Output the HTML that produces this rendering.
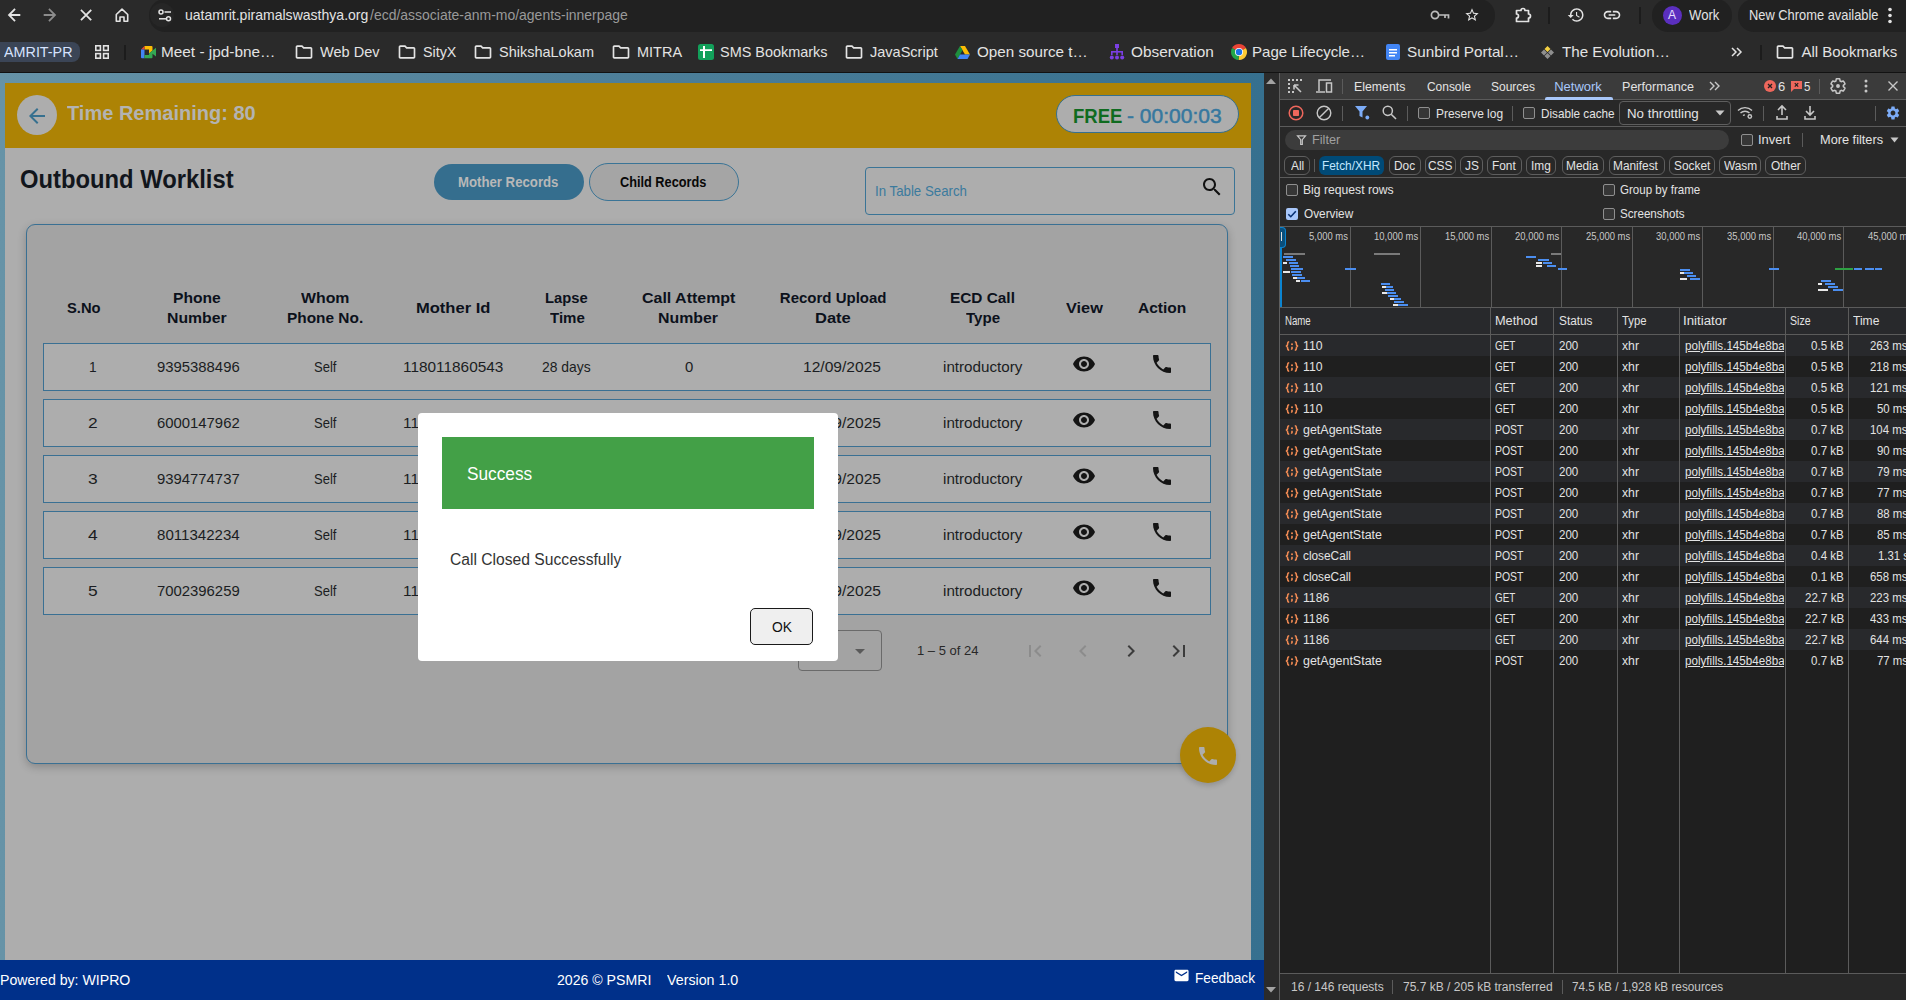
<!DOCTYPE html>
<html><head><meta charset="utf-8">
<style>
html,body{margin:0;padding:0;}
body{width:1906px;height:1000px;position:relative;overflow:hidden;background:#1f1f1f;font-family:"Liberation Sans",sans-serif;}
.a{position:absolute;}
.t{position:absolute;white-space:pre;transform-origin:0 0;font-family:"Liberation Sans",sans-serif;}
svg{position:absolute;overflow:visible;}
</style></head><body>
<!-- ===== Browser chrome ===== -->
<div class="a" style="left:0;top:0;width:1906px;height:72px;background:#2a2a2a"></div>
<div class="a" style="left:0;top:72px;width:1906px;height:1px;background:#121212"></div>
<div class="a" style="left:149px;top:-1px;width:1346px;height:33px;border-radius:16px;background:#212121"></div>
<div class="a" style="left:150px;top:3px;width:24px;height:24px;border-radius:12px;background:#262626"></div>
<div class="a" style="left:1652px;top:-1px;width:80px;height:33px;border-radius:16px;background:#212121"></div>
<div class="a" style="left:1738px;top:-1px;width:190px;height:33px;border-radius:16px;background:#212121"></div>
<!-- back -->
<svg style="left:0;top:0" width="60" height="30" viewBox="0 0 60 30"><g fill="none" stroke="#e3e3e3" stroke-width="1.8" stroke-linecap="square"><path d="M9.6 15H19.4M14.4 9.6L9 15L14.4 20.4"/></g></svg>
<svg style="left:0;top:0" width="60" height="30" viewBox="0 0 60 30"><g fill="none" stroke="#8c8c8c" stroke-width="1.8" stroke-linecap="square"><path d="M44.6 15H54.4M49.6 9.6L55 15L49.6 20.4"/></g></svg>
<svg style="left:0;top:0" width="100" height="30" viewBox="0 0 100 30"><g fill="none" stroke="#e3e3e3" stroke-width="1.8" stroke-linecap="square"><path d="M81.6 10.6L90.6 19.6M90.6 10.6L81.6 19.6"/></g></svg>
<svg style="left:115px;top:8px" width="14" height="14" viewBox="0 0 14 14"><path fill="none" stroke="#e3e3e3" stroke-width="1.6" d="M1.3 6.5 L7 1.2 L12.7 6.5 V13.2 H9 V9 H5 V13.2 H1.3 Z" stroke-linejoin="round"/></svg>
<svg style="left:158px;top:9px" width="14" height="13" viewBox="0 0 14 13"><g fill="none" stroke="#e3e3e3" stroke-width="1.5"><circle cx="3" cy="3" r="2"/><path d="M6.5 3H13"/><circle cx="10.5" cy="9.8" r="2"/><path d="M1 9.8H8"/></g></svg>
<!-- key, star -->
<svg style="left:1430px;top:9px" width="20" height="12" viewBox="0 0 20 12"><g fill="none" stroke="#bdbdbd" stroke-width="1.7"><circle cx="5" cy="6" r="3.6"/><path d="M8.6 6H18.5V9.5M15 6V9"/></g></svg>
<svg style="left:1464px;top:7px" width="16" height="16" viewBox="0 0 24 24"><path fill="#e3e3e3" d="M22 9.24l-7.19-.62L12 2 9.19 8.63 2 9.24l5.46 4.73L5.82 21 12 17.27 18.18 21l-1.63-7.03L22 9.24zM12 15.4l-3.76 2.27 1-4.28-3.32-2.88 4.38-.38L12 6.1l1.71 4.04 4.38.38-3.32 2.88 1 4.28L12 15.4z"/></svg>
<svg style="left:1514px;top:6px" width="18" height="18" viewBox="0 0 18 18"><path d="M2.5 4.5 H7 A2 2 0 0 1 11 4.5 H14.5 V8 A2 2 0 0 1 14.5 12 V15.5 H2.5 V12 A2 2 0 0 0 2.5 8 Z" fill="none" stroke="#e3e3e3" stroke-width="1.7" stroke-linejoin="round"/></svg>
<div class="a" style="left:1548px;top:7px;width:2px;height:17px;background:#1c1c1c"></div>
<svg style="left:1567px;top:6px" width="18" height="18" viewBox="0 0 24 24"><path fill="#e3e3e3" d="M13 3c-4.97 0-9 4.03-9 9H1l3.89 3.89.07.14L9 12H6c0-3.87 3.13-7 7-7s7 3.13 7 7-3.13 7-7 7c-1.93 0-3.68-.79-4.94-2.06l-1.42 1.42C8.27 19.99 10.51 21 13 21c4.97 0 9-4.03 9-9s-4.03-9-9-9zm-1 5v5l4.28 2.54.72-1.21-3.5-2.08V8H12z"/></svg>
<svg style="left:1602px;top:5px" width="20" height="20" viewBox="0 0 24 24"><path fill="#e3e3e3" d="M3.9 12c0-1.71 1.39-3.1 3.1-3.1h4V7H7c-2.76 0-5 2.24-5 5s2.24 5 5 5h4v-1.9H7c-1.71 0-3.1-1.39-3.1-3.1zM8 13h8v-2H8v2zm9-6h-4v1.9h4c1.71 0 3.1 1.39 3.1 3.1s-1.39 3.1-3.1 3.1h-4V17h4c2.76 0 5-2.24 5-5s-2.24-5-5-5z"/></svg>
<div class="a" style="left:1639px;top:7px;width:2px;height:17px;background:#1c1c1c"></div>
<div class="a" style="left:1663px;top:6px;width:19px;height:19px;border-radius:10px;background:#5b2fbf"></div>
<div class="t" style="left:1668px;top:9px;font-size:12px;line-height:13px;color:#e8e0ff">A</div>
<svg style="left:1886px;top:7px" width="8" height="17" viewBox="0 0 8 17"><g fill="#e3e3e3"><circle cx="4" cy="2.5" r="1.8"/><circle cx="4" cy="8.5" r="1.8"/><circle cx="4" cy="14.5" r="1.8"/></g></svg>
<!-- bookmarks -->
<div class="a" style="left:-8px;top:42px;width:88px;height:20px;border-radius:8px;background:#3b4556"></div>
<svg style="left:95px;top:45px" width="14" height="14" viewBox="0 0 14 14"><g fill="none" stroke="#e3e3e3" stroke-width="1.6"><rect x="0.8" y="0.8" width="4.6" height="4.6"/><rect x="8.6" y="0.8" width="4.6" height="4.6"/><rect x="0.8" y="8.6" width="4.6" height="4.6"/><rect x="8.6" y="8.6" width="4.6" height="4.6"/></g></svg>
<div class="a" style="left:124px;top:45px;width:2px;height:15px;background:#1c1c1c"></div>
<svg style="left:140.5px;top:45.8px" width="15" height="13" viewBox="0 0 15 13"><path fill="#fbbc04" d="M3.5 0H10.5Q11.5 0 11.5 1V4.5L8 7.5V3.5H3.5Z"/><path fill="#ea4335" d="M0 3.5L3.5 0V3.5Z"/><path fill="#4285f4" d="M0 3.5H3.5V12.3H1Q0 12.3 0 11.3Z"/><path fill="#34a853" d="M3.5 9H8V7.5L11.5 4.5L15 1.7V10.6L11.5 7.8V11.3Q11.5 12.3 10.5 12.3H3.5Z"/></svg>
<svg style="left:294px;top:42px" width="20" height="20" viewBox="0 0 24 24"><path fill="#e3e3e3" d="M9.17 6l2 2H20v10H4V6h5.17M10 4H4c-1.1 0-1.99.9-1.99 2L2 18c0 1.1.9 2 2 2h16c1.1 0 2-.9 2-2V8c0-1.1-.9-2-2-2h-8l-2-2z"/></svg>
<svg style="left:397px;top:42px" width="20" height="20" viewBox="0 0 24 24"><path fill="#e3e3e3" d="M9.17 6l2 2H20v10H4V6h5.17M10 4H4c-1.1 0-1.99.9-1.99 2L2 18c0 1.1.9 2 2 2h16c1.1 0 2-.9 2-2V8c0-1.1-.9-2-2-2h-8l-2-2z"/></svg>
<svg style="left:472.6px;top:42px" width="20" height="20" viewBox="0 0 24 24"><path fill="#e3e3e3" d="M9.17 6l2 2H20v10H4V6h5.17M10 4H4c-1.1 0-1.99.9-1.99 2L2 18c0 1.1.9 2 2 2h16c1.1 0 2-.9 2-2V8c0-1.1-.9-2-2-2h-8l-2-2z"/></svg>
<svg style="left:610.9px;top:42px" width="20" height="20" viewBox="0 0 24 24"><path fill="#e3e3e3" d="M9.17 6l2 2H20v10H4V6h5.17M10 4H4c-1.1 0-1.99.9-1.99 2L2 18c0 1.1.9 2 2 2h16c1.1 0 2-.9 2-2V8c0-1.1-.9-2-2-2h-8l-2-2z"/></svg>
<svg style="left:844px;top:42px" width="20" height="20" viewBox="0 0 24 24"><path fill="#e3e3e3" d="M9.17 6l2 2H20v10H4V6h5.17M10 4H4c-1.1 0-1.99.9-1.99 2L2 18c0 1.1.9 2 2 2h16c1.1 0 2-.9 2-2V8c0-1.1-.9-2-2-2h-8l-2-2z"/></svg>
<svg style="left:1774.6px;top:42px" width="20" height="20" viewBox="0 0 24 24"><path fill="#e3e3e3" d="M9.17 6l2 2H20v10H4V6h5.17M10 4H4c-1.1 0-1.99.9-1.99 2L2 18c0 1.1.9 2 2 2h16c1.1 0 2-.9 2-2V8c0-1.1-.9-2-2-2h-8l-2-2z"/></svg>
<svg style="left:698px;top:44px" width="16" height="16" viewBox="0 0 16 16"><rect x="0" y="0" width="16" height="16" rx="2.5" fill="#12a05a"/><path d="M5 2H7V14H5Z M2 5.2H14V7H2Z" fill="#fff"/></svg>
<svg style="left:955px;top:46px" width="15" height="13" viewBox="0 0 15 13"><path fill="#fbbc04" d="M5 0H10L15 8.6H10Z"/><path fill="#1e8e3e" d="M5 0 L7.5 4.3 L2.5 13 L0 8.6Z"/><path fill="#4285f4" d="M2.5 13 L5 8.6 H15 L12.5 13Z"/></svg>
<svg style="left:1109px;top:44px" width="16" height="16" viewBox="0 0 16 16"><g fill="#7b3fe4"><rect x="6" y="0" width="4" height="4"/><rect x="7.2" y="4" width="1.6" height="4"/><rect x="2" y="7" width="12" height="1.6"/><rect x="2" y="7" width="1.6" height="4"/><rect x="12.4" y="7" width="1.6" height="4"/><rect x="7.2" y="7" width="1.6" height="4"/><circle cx="2.8" cy="13.5" r="2"/><circle cx="8" cy="13.5" r="2"/><circle cx="13.2" cy="13.5" r="2"/></g></svg>
<svg style="left:1231px;top:44px" width="16" height="16" viewBox="0 0 16 16"><path d="M8 8L1.07 4A8 8 0 0 1 14.93 4Z" fill="#ea4335"/><path d="M8 8L14.93 4A8 8 0 0 1 7.5 16Z" fill="#fcc934"/><path d="M8 8L7.5 16A8 8 0 0 1 1.07 4Z" fill="#22a74a"/><circle cx="8" cy="8" r="4" fill="#fff"/><circle cx="8" cy="8" r="3.2" fill="#1a73e8"/></svg>
<svg style="left:1385px;top:44px" width="16" height="16" viewBox="0 0 16 16"><rect x="1" y="0" width="14" height="16" rx="2" fill="#4285f4"/><path d="M4 5H12V6.5H4Z M4 8H12V9.5H4Z M4 11H10V12.5H4Z" fill="#fff"/></svg>
<svg style="left:1541px;top:46px" width="13" height="13" viewBox="0 0 13 13"><path d="M6.5 0 L9.5 3 L6.5 6 L3.5 3Z" fill="#f5d142"/><path d="M3 3.5 L6 6.5 L3 9.5 L0 6.5Z M10 3.5 L13 6.5 L10 9.5 L7 6.5Z M6.5 7 L9.5 10 L6.5 13 L3.5 10Z" fill="#8f8f8f"/></svg>
<svg style="left:1731px;top:47px" width="11" height="10" viewBox="0 0 11 10"><path fill="none" stroke="#e3e3e3" stroke-width="1.5" d="M1 1 L5 5 L1 9 M6 1 L10 5 L6 9"/></svg>
<div class="a" style="left:1760px;top:45px;width:2px;height:15px;background:#1c1c1c"></div>

<!-- ===== App ===== -->
<div class="a" style="left:0;top:73px;width:1264px;height:887px;background:linear-gradient(90deg,#6693a7 0%,#4f809a 45%,#36708f 100%)"></div>
<div class="a" style="left:5px;top:83px;width:1246px;height:877px;background:#adadad"></div>
<div class="a" style="left:5px;top:83px;width:1246px;height:65px;background:#ad8305"></div>
<div class="a" style="left:17px;top:95px;width:40px;height:40px;border-radius:20px;background:#adadad"></div>
<svg style="left:25px;top:104px" width="24" height="24" viewBox="0 0 24 24"><path fill="#36708f" d="M20 11H7.83l5.59-5.59L12 4l-8 8 8 8 1.41-1.41L7.83 13H20v-2z"/></svg>
<div class="a" style="left:1056px;top:95px;width:181px;height:36px;border-radius:19px;background:#adadad;border:1px solid #36708f"></div>
<div class="a" style="left:434px;top:164px;width:150px;height:36px;border-radius:18px;background:#356e8e"></div>
<div class="a" style="left:589px;top:163px;width:148px;height:36px;border-radius:19px;background:#a5a5a5;border:1px solid #3a7496"></div>
<div class="a" style="left:865px;top:167px;width:368px;height:46px;border-radius:4px;border:1px solid #3a7496"></div>
<svg style="left:1200px;top:175px" width="24" height="24" viewBox="0 0 24 24"><path fill="#111" d="M15.5 14h-.79l-.28-.27C15.41 12.59 16 11.11 16 9.5 16 5.91 13.09 3 9.5 3S3 5.91 3 9.5 5.91 16 9.5 16c1.61 0 3.09-.59 4.23-1.57l.27.28v.79l5 4.99L20.49 19l-4.99-5zm-6 0C7.01 14 5 11.99 5 9.5S7.01 5 9.5 5 14 7.01 14 9.5 11.99 14 9.5 14z"/></svg>
<!-- card -->
<div class="a" style="left:26px;top:224px;width:1200px;height:538px;border-radius:9px;background:#a3a3a3;border:1px solid #3a7093;box-shadow:0 3px 8px rgba(0,0,0,0.22)"></div>
<div class="a" style="left:43px;top:343px;width:1166px;height:46px;background:#adadad;border:1px solid #3a7093"></div>
<svg style="left:1072px;top:352px" width="24" height="24" viewBox="0 0 24 24"><path fill="#141414" d="M12 4.5C7 4.5 2.73 7.61 1 12c1.73 4.39 6 7.5 11 7.5s9.27-3.11 11-7.5c-1.73-4.39-6-7.5-11-7.5zM12 17c-2.76 0-5-2.24-5-5s2.24-5 5-5 5 2.24 5 5-2.24 5-5 5zm0-8c-1.66 0-3 1.34-3 3s1.34 3 3 3 3-1.34 3-3-1.34-3-3-3z"/></svg>
<svg style="left:1150px;top:352px" width="24" height="24" viewBox="0 0 24 24"><path fill="#141414" d="M6.62 10.79c1.44 2.83 3.76 5.14 6.59 6.59l2.2-2.2c.27-.27.67-.36 1.02-.24 1.12.37 2.33.57 3.57.57.55 0 1 .45 1 1V20c0 .55-.45 1-1 1-9.39 0-17-7.61-17-17 0-.55.45-1 1-1h3.5c.55 0 1 .45 1 1 0 1.25.2 2.45.57 3.57.11.35.03.74-.25 1.02l-2.2 2.2z"/></svg>
<div class="a" style="left:43px;top:399px;width:1166px;height:46px;background:#adadad;border:1px solid #3a7093"></div>
<svg style="left:1072px;top:408px" width="24" height="24" viewBox="0 0 24 24"><path fill="#141414" d="M12 4.5C7 4.5 2.73 7.61 1 12c1.73 4.39 6 7.5 11 7.5s9.27-3.11 11-7.5c-1.73-4.39-6-7.5-11-7.5zM12 17c-2.76 0-5-2.24-5-5s2.24-5 5-5 5 2.24 5 5-2.24 5-5 5zm0-8c-1.66 0-3 1.34-3 3s1.34 3 3 3 3-1.34 3-3-1.34-3-3-3z"/></svg>
<svg style="left:1150px;top:408px" width="24" height="24" viewBox="0 0 24 24"><path fill="#141414" d="M6.62 10.79c1.44 2.83 3.76 5.14 6.59 6.59l2.2-2.2c.27-.27.67-.36 1.02-.24 1.12.37 2.33.57 3.57.57.55 0 1 .45 1 1V20c0 .55-.45 1-1 1-9.39 0-17-7.61-17-17 0-.55.45-1 1-1h3.5c.55 0 1 .45 1 1 0 1.25.2 2.45.57 3.57.11.35.03.74-.25 1.02l-2.2 2.2z"/></svg>
<div class="a" style="left:43px;top:455px;width:1166px;height:46px;background:#adadad;border:1px solid #3a7093"></div>
<svg style="left:1072px;top:464px" width="24" height="24" viewBox="0 0 24 24"><path fill="#141414" d="M12 4.5C7 4.5 2.73 7.61 1 12c1.73 4.39 6 7.5 11 7.5s9.27-3.11 11-7.5c-1.73-4.39-6-7.5-11-7.5zM12 17c-2.76 0-5-2.24-5-5s2.24-5 5-5 5 2.24 5 5-2.24 5-5 5zm0-8c-1.66 0-3 1.34-3 3s1.34 3 3 3 3-1.34 3-3-1.34-3-3-3z"/></svg>
<svg style="left:1150px;top:464px" width="24" height="24" viewBox="0 0 24 24"><path fill="#141414" d="M6.62 10.79c1.44 2.83 3.76 5.14 6.59 6.59l2.2-2.2c.27-.27.67-.36 1.02-.24 1.12.37 2.33.57 3.57.57.55 0 1 .45 1 1V20c0 .55-.45 1-1 1-9.39 0-17-7.61-17-17 0-.55.45-1 1-1h3.5c.55 0 1 .45 1 1 0 1.25.2 2.45.57 3.57.11.35.03.74-.25 1.02l-2.2 2.2z"/></svg>
<div class="a" style="left:43px;top:511px;width:1166px;height:46px;background:#adadad;border:1px solid #3a7093"></div>
<svg style="left:1072px;top:520px" width="24" height="24" viewBox="0 0 24 24"><path fill="#141414" d="M12 4.5C7 4.5 2.73 7.61 1 12c1.73 4.39 6 7.5 11 7.5s9.27-3.11 11-7.5c-1.73-4.39-6-7.5-11-7.5zM12 17c-2.76 0-5-2.24-5-5s2.24-5 5-5 5 2.24 5 5-2.24 5-5 5zm0-8c-1.66 0-3 1.34-3 3s1.34 3 3 3 3-1.34 3-3-1.34-3-3-3z"/></svg>
<svg style="left:1150px;top:520px" width="24" height="24" viewBox="0 0 24 24"><path fill="#141414" d="M6.62 10.79c1.44 2.83 3.76 5.14 6.59 6.59l2.2-2.2c.27-.27.67-.36 1.02-.24 1.12.37 2.33.57 3.57.57.55 0 1 .45 1 1V20c0 .55-.45 1-1 1-9.39 0-17-7.61-17-17 0-.55.45-1 1-1h3.5c.55 0 1 .45 1 1 0 1.25.2 2.45.57 3.57.11.35.03.74-.25 1.02l-2.2 2.2z"/></svg>
<div class="a" style="left:43px;top:567px;width:1166px;height:46px;background:#adadad;border:1px solid #3a7093"></div>
<svg style="left:1072px;top:576px" width="24" height="24" viewBox="0 0 24 24"><path fill="#141414" d="M12 4.5C7 4.5 2.73 7.61 1 12c1.73 4.39 6 7.5 11 7.5s9.27-3.11 11-7.5c-1.73-4.39-6-7.5-11-7.5zM12 17c-2.76 0-5-2.24-5-5s2.24-5 5-5 5 2.24 5 5-2.24 5-5 5zm0-8c-1.66 0-3 1.34-3 3s1.34 3 3 3 3-1.34 3-3-1.34-3-3-3z"/></svg>
<svg style="left:1150px;top:576px" width="24" height="24" viewBox="0 0 24 24"><path fill="#141414" d="M6.62 10.79c1.44 2.83 3.76 5.14 6.59 6.59l2.2-2.2c.27-.27.67-.36 1.02-.24 1.12.37 2.33.57 3.57.57.55 0 1 .45 1 1V20c0 .55-.45 1-1 1-9.39 0-17-7.61-17-17 0-.55.45-1 1-1h3.5c.55 0 1 .45 1 1 0 1.25.2 2.45.57 3.57.11.35.03.74-.25 1.02l-2.2 2.2z"/></svg>
<!-- pagination -->
<div class="a" style="left:798px;top:630px;width:82px;height:39px;border-radius:4px;border:1px solid #6a6a6a"></div>
<svg style="left:848px;top:639px" width="24" height="24" viewBox="0 0 24 24"><path fill="#5a5a5a" d="M7 10l5 5 5-5z"/></svg>
<svg style="left:1023px;top:639px" width="24" height="24" viewBox="0 0 24 24"><path fill="#8c8c8c" d="M18.41 16.59L13.82 12l4.59-4.59L17 6l-6 6 6 6zM6 6h2v12H6z"/></svg>
<svg style="left:1071px;top:639px" width="24" height="24" viewBox="0 0 24 24"><path fill="#8c8c8c" d="M15.41 7.41L14 6l-6 6 6 6 1.41-1.41L10.83 12z"/></svg>
<svg style="left:1119px;top:639px" width="24" height="24" viewBox="0 0 24 24"><path fill="#3c3c3c" d="M10 6L8.59 7.41 13.17 12l-4.58 4.59L10 18l6-6z"/></svg>
<svg style="left:1167px;top:639px" width="24" height="24" viewBox="0 0 24 24"><path fill="#3c3c3c" d="M5.59 7.41L10.18 12l-4.59 4.59L7 18l6-6-6-6zM16 6h2v12h-2z"/></svg>
<!-- fab -->
<div class="a" style="left:1180px;top:727px;width:56px;height:56px;border-radius:28px;background:#ad8305;box-shadow:0 3px 5px rgba(0,0,0,0.15)"></div>
<svg style="left:1195.7px;top:743.9px" width="24" height="24" viewBox="0 0 24 24"><path fill="#adadad" d="M6.62 10.79c1.44 2.83 3.76 5.14 6.59 6.59l2.2-2.2c.27-.27.67-.36 1.02-.24 1.12.37 2.33.57 3.57.57.55 0 1 .45 1 1V20c0 .55-.45 1-1 1-9.39 0-17-7.61-17-17 0-.55.45-1 1-1h3.5c.55 0 1 .45 1 1 0 1.25.2 2.45.57 3.57.11.35.03.74-.25 1.02l-2.2 2.2z"/></svg>
<div class="t" style="left:67.00px;top:102px;font-size:21px;line-height:21px;color:#b3b3b3;font-weight:bold;transform:scaleX(0.9527);">Time Remaining: 80</div>
<div class="t" style="left:1072.62px;top:105px;font-size:21px;line-height:21px;color:#0f6b20;font-weight:bold;transform:scaleX(0.8818);">FREE</div>
<div class="t" style="left:1127.00px;top:105px;font-size:21px;line-height:21px;color:#36789f;-webkit-text-stroke:0.5px #36789f;">- 00:00:03</div>
<div class="t" style="left:20.09px;top:166px;font-size:26px;line-height:26px;color:#12161c;font-weight:bold;transform:scaleX(0.9148);">Outbound Worklist</div>
<div class="t" style="left:458.40px;top:175px;font-size:14px;line-height:14px;color:#b8b8b8;font-weight:bold;transform:scaleX(0.9421);">Mother Records</div>
<div class="t" style="left:620.00px;top:175px;font-size:14px;line-height:14px;color:#080808;font-weight:bold;transform:scaleX(0.9094);">Child Records</div>
<div class="t" style="left:875.12px;top:183px;font-size:15px;line-height:15px;color:#3b7a9d;transform:scaleX(0.8845);">In Table Search</div>
<div class="t" style="left:66.60px;top:300px;font-size:15px;line-height:15px;color:#0c111b;font-weight:bold;transform:scaleX(0.9822);">S.No</div>
<div class="t" style="left:173.46px;top:290px;font-size:15px;line-height:15px;color:#0c111b;font-weight:bold;transform:scaleX(1.0429);">Phone</div>
<div class="t" style="left:167.25px;top:310px;font-size:15px;line-height:15px;color:#0c111b;font-weight:bold;transform:scaleX(1.0531);">Number</div>
<div class="t" style="left:301.20px;top:290px;font-size:15px;line-height:15px;color:#0c111b;font-weight:bold;transform:scaleX(1.0575);">Whom</div>
<div class="t" style="left:287.07px;top:310px;font-size:15px;line-height:15px;color:#0c111b;font-weight:bold;transform:scaleX(1.0274);">Phone No.</div>
<div class="t" style="left:415.90px;top:300px;font-size:15px;line-height:15px;color:#0c111b;font-weight:bold;transform:scaleX(1.1021);">Mother Id</div>
<div class="t" style="left:545.12px;top:290px;font-size:15px;line-height:15px;color:#0c111b;font-weight:bold;transform:scaleX(0.9831);">Lapse</div>
<div class="t" style="left:550.20px;top:310px;font-size:15px;line-height:15px;color:#0c111b;font-weight:bold;transform:scaleX(1.0030);">Time</div>
<div class="t" style="left:642.00px;top:290px;font-size:15px;line-height:15px;color:#0c111b;font-weight:bold;transform:scaleX(1.0640);">Call Attempt</div>
<div class="t" style="left:658.34px;top:310px;font-size:15px;line-height:15px;color:#0c111b;font-weight:bold;transform:scaleX(1.0584);">Number</div>
<div class="t" style="left:779.80px;top:290px;font-size:15px;line-height:15px;color:#0c111b;font-weight:bold;">Record Upload</div>
<div class="t" style="left:815.10px;top:310px;font-size:15px;line-height:15px;color:#0c111b;font-weight:bold;transform:scaleX(1.1004);">Date</div>
<div class="t" style="left:950.08px;top:290px;font-size:15px;line-height:15px;color:#0c111b;font-weight:bold;transform:scaleX(1.0245);">ECD Call</div>
<div class="t" style="left:966.30px;top:310px;font-size:15px;line-height:15px;color:#0c111b;font-weight:bold;transform:scaleX(1.0073);">Type</div>
<div class="t" style="left:1065.50px;top:300px;font-size:15px;line-height:15px;color:#0c111b;font-weight:bold;transform:scaleX(1.0863);">View</div>
<div class="t" style="left:1138.10px;top:300px;font-size:15px;line-height:15px;color:#0c111b;font-weight:bold;transform:scaleX(1.0344);">Action</div>
<div class="t" style="left:88.96px;top:360px;font-size:14.5px;line-height:14.5px;color:#1b1d22;transform:scaleX(0.9429);">1</div>
<div class="t" style="left:156.50px;top:360px;font-size:14.5px;line-height:14.5px;color:#1b1d22;transform:scaleX(1.0251);">9395388496</div>
<div class="t" style="left:313.70px;top:360px;font-size:14.5px;line-height:14.5px;color:#1b1d22;transform:scaleX(0.8976);">Self</div>
<div class="t" style="left:403.14px;top:360px;font-size:14.5px;line-height:14.5px;color:#1b1d22;transform:scaleX(1.0604);">118011860543</div>
<div class="t" style="left:542.40px;top:360px;font-size:14.5px;line-height:14.5px;color:#1b1d22;transform:scaleX(0.9577);">28 days</div>
<div class="t" style="left:684.80px;top:360px;font-size:14.5px;line-height:14.5px;color:#1b1d22;transform:scaleX(1.0250);">0</div>
<div class="t" style="left:802.72px;top:360px;font-size:14.5px;line-height:14.5px;color:#1b1d22;transform:scaleX(1.0754);">12/09/2025</div>
<div class="t" style="left:942.60px;top:360px;font-size:14.5px;line-height:14.5px;color:#1b1d22;transform:scaleX(1.0483);">introductory</div>
<div class="t" style="left:88.40px;top:416px;font-size:14.5px;line-height:14.5px;color:#1b1d22;transform:scaleX(1.2000);">2</div>
<div class="t" style="left:156.50px;top:416px;font-size:14.5px;line-height:14.5px;color:#1b1d22;transform:scaleX(1.0251);">6000147962</div>
<div class="t" style="left:313.70px;top:416px;font-size:14.5px;line-height:14.5px;color:#1b1d22;transform:scaleX(0.8976);">Self</div>
<div class="t" style="left:403.14px;top:416px;font-size:14.5px;line-height:14.5px;color:#1b1d22;transform:scaleX(1.0604);">118011860544</div>
<div class="t" style="left:542.40px;top:416px;font-size:14.5px;line-height:14.5px;color:#1b1d22;transform:scaleX(0.9577);">28 days</div>
<div class="t" style="left:684.80px;top:416px;font-size:14.5px;line-height:14.5px;color:#1b1d22;transform:scaleX(1.0250);">0</div>
<div class="t" style="left:802.72px;top:416px;font-size:14.5px;line-height:14.5px;color:#1b1d22;transform:scaleX(1.0754);">12/09/2025</div>
<div class="t" style="left:942.60px;top:416px;font-size:14.5px;line-height:14.5px;color:#1b1d22;transform:scaleX(1.0483);">introductory</div>
<div class="t" style="left:88.40px;top:472px;font-size:14.5px;line-height:14.5px;color:#1b1d22;transform:scaleX(1.2000);">3</div>
<div class="t" style="left:156.50px;top:472px;font-size:14.5px;line-height:14.5px;color:#1b1d22;transform:scaleX(1.0251);">9394774737</div>
<div class="t" style="left:313.70px;top:472px;font-size:14.5px;line-height:14.5px;color:#1b1d22;transform:scaleX(0.8976);">Self</div>
<div class="t" style="left:403.14px;top:472px;font-size:14.5px;line-height:14.5px;color:#1b1d22;transform:scaleX(1.0604);">118011860545</div>
<div class="t" style="left:542.40px;top:472px;font-size:14.5px;line-height:14.5px;color:#1b1d22;transform:scaleX(0.9577);">28 days</div>
<div class="t" style="left:684.80px;top:472px;font-size:14.5px;line-height:14.5px;color:#1b1d22;transform:scaleX(1.0250);">0</div>
<div class="t" style="left:802.72px;top:472px;font-size:14.5px;line-height:14.5px;color:#1b1d22;transform:scaleX(1.0754);">12/09/2025</div>
<div class="t" style="left:942.60px;top:472px;font-size:14.5px;line-height:14.5px;color:#1b1d22;transform:scaleX(1.0483);">introductory</div>
<div class="t" style="left:88.40px;top:528px;font-size:14.5px;line-height:14.5px;color:#1b1d22;transform:scaleX(1.2000);">4</div>
<div class="t" style="left:156.50px;top:528px;font-size:14.5px;line-height:14.5px;color:#1b1d22;transform:scaleX(1.0390);">8011342234</div>
<div class="t" style="left:313.70px;top:528px;font-size:14.5px;line-height:14.5px;color:#1b1d22;transform:scaleX(0.8976);">Self</div>
<div class="t" style="left:403.14px;top:528px;font-size:14.5px;line-height:14.5px;color:#1b1d22;transform:scaleX(1.0604);">118011860546</div>
<div class="t" style="left:542.40px;top:528px;font-size:14.5px;line-height:14.5px;color:#1b1d22;transform:scaleX(0.9577);">28 days</div>
<div class="t" style="left:684.80px;top:528px;font-size:14.5px;line-height:14.5px;color:#1b1d22;transform:scaleX(1.0250);">0</div>
<div class="t" style="left:802.72px;top:528px;font-size:14.5px;line-height:14.5px;color:#1b1d22;transform:scaleX(1.0754);">12/09/2025</div>
<div class="t" style="left:942.60px;top:528px;font-size:14.5px;line-height:14.5px;color:#1b1d22;transform:scaleX(1.0483);">introductory</div>
<div class="t" style="left:88.40px;top:584px;font-size:14.5px;line-height:14.5px;color:#1b1d22;transform:scaleX(1.2000);">5</div>
<div class="t" style="left:156.50px;top:584px;font-size:14.5px;line-height:14.5px;color:#1b1d22;transform:scaleX(1.0251);">7002396259</div>
<div class="t" style="left:313.70px;top:584px;font-size:14.5px;line-height:14.5px;color:#1b1d22;transform:scaleX(0.8976);">Self</div>
<div class="t" style="left:403.14px;top:584px;font-size:14.5px;line-height:14.5px;color:#1b1d22;transform:scaleX(1.0604);">118011860547</div>
<div class="t" style="left:542.40px;top:584px;font-size:14.5px;line-height:14.5px;color:#1b1d22;transform:scaleX(0.9577);">28 days</div>
<div class="t" style="left:684.80px;top:584px;font-size:14.5px;line-height:14.5px;color:#1b1d22;transform:scaleX(1.0250);">0</div>
<div class="t" style="left:802.72px;top:584px;font-size:14.5px;line-height:14.5px;color:#1b1d22;transform:scaleX(1.0754);">12/09/2025</div>
<div class="t" style="left:942.60px;top:584px;font-size:14.5px;line-height:14.5px;color:#1b1d22;transform:scaleX(1.0483);">introductory</div>
<div class="t" style="left:917.04px;top:644px;font-size:13.5px;line-height:13.5px;color:#282828;transform:scaleX(0.9638);">1 – 5 of 24</div>
<!-- modal -->
<div class="a" style="left:418px;top:413px;width:420px;height:248px;border-radius:4px;background:#ffffff"></div>
<div class="a" style="left:442px;top:437px;width:372px;height:72px;background:#43a047"></div>
<div class="a" style="left:750px;top:608px;width:61px;height:35px;border-radius:5px;background:#efefef;border:1.5px solid #1a1a1a"></div>
<div class="t" style="left:466.80px;top:465px;font-size:18px;line-height:18px;color:#ffffff;transform:scaleX(0.9584);">Success</div>
<div class="t" style="left:449.70px;top:552px;font-size:16px;line-height:16px;color:#333333;transform:scaleX(0.9779);">Call Closed Successfully</div>
<div class="t" style="left:772.00px;top:619px;font-size:15px;line-height:15px;color:#111111;transform:scaleX(0.9230);">OK</div>
<!-- footer -->
<div class="a" style="left:0;top:960px;width:1264px;height:40px;background:#00308a"></div>
<svg style="left:1173px;top:967px" width="17" height="17" viewBox="0 0 24 24"><path fill="#fff" d="M20 4H4c-1.1 0-1.99.9-1.99 2L2 18c0 1.1.9 2 2 2h16c1.1 0 2-.9 2-2V6c0-1.1-.9-2-2-2zm0 4l-8 5-8-5V6l8 5 8-5v2z"/></svg>
<div class="t" style="left:-0.47px;top:973px;font-size:14.5px;line-height:14.5px;color:#ffffff;transform:scaleX(0.9744);">Powered by: WIPRO</div>
<div class="t" style="left:557.00px;top:973px;font-size:14.5px;line-height:14.5px;color:#ffffff;transform:scaleX(0.9730);">2026 © PSMRI</div>
<div class="t" style="left:667.40px;top:973px;font-size:14.5px;line-height:14.5px;color:#ffffff;transform:scaleX(0.9823);">Version 1.0</div>
<div class="t" style="left:1194.76px;top:971px;font-size:14.5px;line-height:14.5px;color:#ffffff;transform:scaleX(0.9428);">Feedback</div>
<!-- scrollbar -->
<div class="a" style="left:1264px;top:73px;width:15px;height:927px;background:#2b2b2b"></div>
<svg style="left:1266px;top:78px" width="10" height="6" viewBox="0 0 10 6"><path fill="#a3a3a3" d="M0 6 L5 0.5 L10 6Z"/></svg>
<svg style="left:1266px;top:987px" width="10" height="6" viewBox="0 0 10 6"><path fill="#a3a3a3" d="M0 0 L5 5.5 L10 0Z"/></svg>
<div class="a" style="left:1279px;top:73px;width:1px;height:927px;background:#5e5e5e"></div>
<div class="a" style="left:1280px;top:73px;width:626px;height:927px;background:#1f1f1f"></div>
<div class="a" style="left:1280px;top:73px;width:626px;height:26px;background:#3b3b3b"></div>
<div class="a" style="left:1280px;top:99px;width:626px;height:1px;background:#5b5b5b"></div>
<div class="a" style="left:1280px;top:100px;width:626px;height:126px;background:#282828"></div>
<div class="a" style="left:1280px;top:126px;width:626px;height:1px;background:#5b5b5b"></div>
<div class="a" style="left:1280px;top:177px;width:626px;height:1px;background:#5b5b5b"></div>
<div class="a" style="left:1280px;top:226px;width:626px;height:1px;background:#5b5b5b"></div>
<div class="a" style="left:1280px;top:227px;width:626px;height:80px;background:#282828"></div>
<div class="a" style="left:1280px;top:307px;width:626px;height:1px;background:#5b5b5b"></div>
<div class="a" style="left:1280px;top:308px;width:626px;height:26px;background:#28292c"></div>
<div class="a" style="left:1280px;top:334px;width:626px;height:1px;background:#5b5b5b"></div>
<div class="a" style="left:1280px;top:335px;width:626px;height:21px;background:#28292c"></div>
<div class="a" style="left:1280px;top:377px;width:626px;height:21px;background:#28292c"></div>
<div class="a" style="left:1280px;top:419px;width:626px;height:21px;background:#28292c"></div>
<div class="a" style="left:1280px;top:461px;width:626px;height:21px;background:#28292c"></div>
<div class="a" style="left:1280px;top:503px;width:626px;height:21px;background:#28292c"></div>
<div class="a" style="left:1280px;top:545px;width:626px;height:21px;background:#28292c"></div>
<div class="a" style="left:1280px;top:587px;width:626px;height:21px;background:#28292c"></div>
<div class="a" style="left:1280px;top:629px;width:626px;height:21px;background:#28292c"></div>
<div class="a" style="left:1280px;top:973px;width:626px;height:1px;background:#5b5b5b"></div>
<div class="a" style="left:1280px;top:974px;width:626px;height:26px;background:#282828"></div>
<div class="a" style="left:1350px;top:227px;width:1px;height:80px;background:#5b5b5b"></div>
<div class="a" style="left:1420px;top:227px;width:1px;height:80px;background:#5b5b5b"></div>
<div class="a" style="left:1491px;top:227px;width:1px;height:80px;background:#5b5b5b"></div>
<div class="a" style="left:1561px;top:227px;width:1px;height:80px;background:#5b5b5b"></div>
<div class="a" style="left:1632px;top:227px;width:1px;height:80px;background:#5b5b5b"></div>
<div class="a" style="left:1702px;top:227px;width:1px;height:80px;background:#5b5b5b"></div>
<div class="a" style="left:1773px;top:227px;width:1px;height:80px;background:#5b5b5b"></div>
<div class="a" style="left:1843px;top:227px;width:1px;height:80px;background:#5b5b5b"></div>
<div class="a" style="left:1490px;top:308px;width:1px;height:665px;background:#5b5b5b"></div>
<div class="a" style="left:1553px;top:308px;width:1px;height:665px;background:#5b5b5b"></div>
<div class="a" style="left:1617px;top:308px;width:1px;height:665px;background:#5b5b5b"></div>
<div class="a" style="left:1679px;top:308px;width:1px;height:665px;background:#5b5b5b"></div>
<div class="a" style="left:1785px;top:308px;width:1px;height:665px;background:#5b5b5b"></div>
<div class="a" style="left:1848px;top:308px;width:1px;height:665px;background:#5b5b5b"></div>
<div class="a" style="left:1280px;top:227px;width:2px;height:80px;background:#0b84d0"></div>
<div class="a" style="left:1280px;top:227px;width:5px;height:19px;border-radius:0 4px 4px 0;background:#0a4f7c;border:1px solid #0b84d0;border-left:none"></div>
<div class="a" style="left:1281px;top:232px;width:1px;height:9px;background:#e0e0e0"></div>
<div class="a" style="left:1283px;top:256px;width:10px;height:2px;background:#4b8ef0"></div>
<div class="a" style="left:1286px;top:259px;width:10px;height:2px;background:#4b8ef0"></div>
<div class="a" style="left:1289px;top:262px;width:9px;height:2px;background:#4b8ef0"></div>
<div class="a" style="left:1290px;top:265px;width:9px;height:2px;background:#4b8ef0"></div>
<div class="a" style="left:1291px;top:268px;width:12px;height:2px;background:#4b8ef0"></div>
<div class="a" style="left:1291px;top:271px;width:10px;height:2px;background:#4b8ef0"></div>
<div class="a" style="left:1292px;top:274px;width:10px;height:2px;background:#4b8ef0"></div>
<div class="a" style="left:1296px;top:277px;width:9px;height:2px;background:#4b8ef0"></div>
<div class="a" style="left:1301px;top:280px;width:9px;height:2px;background:#4b8ef0"></div>
<div class="a" style="left:1345px;top:268px;width:11px;height:2px;background:#4b8ef0"></div>
<div class="a" style="left:1381px;top:283px;width:9px;height:2px;background:#4b8ef0"></div>
<div class="a" style="left:1383px;top:286px;width:10px;height:2px;background:#4b8ef0"></div>
<div class="a" style="left:1385px;top:289px;width:9px;height:2px;background:#4b8ef0"></div>
<div class="a" style="left:1386px;top:292px;width:10px;height:2px;background:#4b8ef0"></div>
<div class="a" style="left:1388px;top:295px;width:10px;height:2px;background:#4b8ef0"></div>
<div class="a" style="left:1391px;top:298px;width:10px;height:2px;background:#4b8ef0"></div>
<div class="a" style="left:1394px;top:301px;width:10px;height:2px;background:#4b8ef0"></div>
<div class="a" style="left:1397px;top:304px;width:11px;height:2px;background:#4b8ef0"></div>
<div class="a" style="left:1526px;top:256px;width:10px;height:2px;background:#4b8ef0"></div>
<div class="a" style="left:1538px;top:259px;width:11px;height:2px;background:#4b8ef0"></div>
<div class="a" style="left:1543px;top:262px;width:9px;height:2px;background:#4b8ef0"></div>
<div class="a" style="left:1547px;top:265px;width:9px;height:2px;background:#4b8ef0"></div>
<div class="a" style="left:1558px;top:268px;width:9px;height:2px;background:#4b8ef0"></div>
<div class="a" style="left:1680px;top:269px;width:10px;height:2px;background:#4b8ef0"></div>
<div class="a" style="left:1683px;top:272px;width:10px;height:2px;background:#4b8ef0"></div>
<div class="a" style="left:1687px;top:275px;width:9px;height:2px;background:#4b8ef0"></div>
<div class="a" style="left:1690px;top:278px;width:10px;height:2px;background:#4b8ef0"></div>
<div class="a" style="left:1769px;top:268px;width:10px;height:2px;background:#4b8ef0"></div>
<div class="a" style="left:1854px;top:268px;width:8px;height:2px;background:#4b8ef0"></div>
<div class="a" style="left:1865px;top:268px;width:9px;height:2px;background:#4b8ef0"></div>
<div class="a" style="left:1875px;top:268px;width:7px;height:2px;background:#4b8ef0"></div>
<div class="a" style="left:1821px;top:280px;width:10px;height:2px;background:#4b8ef0"></div>
<div class="a" style="left:1825px;top:283px;width:10px;height:2px;background:#4b8ef0"></div>
<div class="a" style="left:1828px;top:286px;width:10px;height:2px;background:#4b8ef0"></div>
<div class="a" style="left:1833px;top:289px;width:10px;height:2px;background:#4b8ef0"></div>
<div class="a" style="left:1835px;top:268px;width:18px;height:2px;background:#2ea043"></div>
<div class="a" style="left:1284px;top:253px;width:21px;height:2px;background:#7a7a7a"></div>
<div class="a" style="left:1374px;top:253px;width:26px;height:2px;background:#7a7a7a"></div>
<div class="a" style="left:1551px;top:253px;width:10px;height:2px;background:#7a7a7a"></div>
<div class="a" style="left:1283px;top:262px;width:4px;height:2px;background:#e8e8e8"></div>
<div class="a" style="left:1283px;top:271px;width:7px;height:2px;background:#e8e8e8"></div>
<div class="a" style="left:1293px;top:277px;width:4px;height:2px;background:#e8e8e8"></div>
<div class="a" style="left:1296px;top:280px;width:4px;height:2px;background:#e8e8e8"></div>
<div class="a" style="left:1382px;top:286px;width:4px;height:2px;background:#e8e8e8"></div>
<div class="a" style="left:1382px;top:292px;width:5px;height:2px;background:#e8e8e8"></div>
<div class="a" style="left:1390px;top:298px;width:4px;height:2px;background:#e8e8e8"></div>
<div class="a" style="left:1393px;top:304px;width:5px;height:2px;background:#e8e8e8"></div>
<div class="a" style="left:1536px;top:262px;width:6px;height:2px;background:#e8e8e8"></div>
<div class="a" style="left:1536px;top:265px;width:6px;height:2px;background:#e8e8e8"></div>
<div class="a" style="left:1680px;top:272px;width:4px;height:2px;background:#e8e8e8"></div>
<div class="a" style="left:1680px;top:278px;width:7px;height:2px;background:#e8e8e8"></div>
<div class="a" style="left:1818px;top:283px;width:4px;height:2px;background:#e8e8e8"></div>
<div class="a" style="left:1818px;top:289px;width:10px;height:2px;background:#e8e8e8"></div>
<svg style="left:1288px;top:79px" width="15" height="14" viewBox="0 0 15 14"><g fill="#c7c7c7"><rect x="0" y="0" width="2" height="2"/><rect x="4" y="0" width="2" height="2"/><rect x="8" y="0" width="2" height="2"/><rect x="12" y="0" width="2" height="2"/><rect x="0" y="4" width="2" height="2"/><rect x="0" y="8" width="2" height="2"/><rect x="0" y="12" width="2" height="2"/><rect x="4" y="12" width="2" height="2"/></g><path d="M6 6 L13 13 M6 6 V10.5 M6 6 H10.5" stroke="#c7c7c7" stroke-width="1.6" fill="none"/></svg>
<svg style="left:1316px;top:79px" width="17" height="14" viewBox="0 0 17 14"><g fill="none" stroke="#c7c7c7" stroke-width="1.5"><path d="M3 12V1H15"/><rect x="10.5" y="4" width="5" height="9"/><path d="M0 13H9"/></g></svg>
<div class="a" style="left:1342px;top:79px;width:1px;height:15px;background:#5b5b5b"></div>
<div class="a" style="left:1545px;top:97px;width:68px;height:3px;border-radius:2px 2px 0 0;background:#a8c7fa"></div>
<svg style="left:1709px;top:81px" width="12" height="10" viewBox="0 0 12 10"><path fill="none" stroke="#c7c7c7" stroke-width="1.4" d="M1 1 L5 5 L1 9 M6 1 L10 5 L6 9"/></svg>
<svg style="left:1764px;top:80px" width="12" height="12" viewBox="0 0 12 12"><circle cx="6" cy="6" r="6" fill="#ee675c"/><path d="M4 4L8 8M8 4L4 8" stroke="#202020" stroke-width="1.3"/></svg>
<svg style="left:1791px;top:81px" width="11" height="11" viewBox="0 0 11 11"><path d="M0 0H11V8H3L0 11Z" fill="#ee675c"/><path d="M3.8 2.2L7.2 5.6M7.2 2.2L3.8 5.6" stroke="#202020" stroke-width="1.2"/></svg>
<div class="a" style="left:1819px;top:79px;width:1px;height:15px;background:#5b5b5b"></div>
<svg style="left:1829px;top:77px" width="18" height="18" viewBox="0 0 24 24"><path fill="none" stroke="#c7c7c7" stroke-width="2" d="M19.14 12.94c.04-.3.06-.61.06-.94 0-.32-.02-.64-.07-.94l2.03-1.58c.18-.14.23-.41.12-.61l-1.92-3.32c-.12-.22-.37-.29-.59-.22l-2.39.96c-.5-.38-1.03-.7-1.62-.94l-.36-2.54c-.04-.24-.24-.41-.48-.41h-3.84c-.24 0-.43.17-.47.41l-.36 2.54c-.59.24-1.13.57-1.62.94l-2.39-.96c-.22-.08-.47 0-.59.22L2.74 8.87c-.12.21-.08.47.12.61l2.03 1.58c-.05.3-.09.63-.09.94s.02.64.07.94l-2.03 1.58c-.18.14-.23.41-.12.61l1.92 3.32c.12.22.37.29.59.22l2.39-.96c.5.38 1.03.7 1.62.94l.36 2.54c.05.24.24.41.48.41h3.84c.24 0 .44-.17.47-.41l.36-2.54c.59-.24 1.13-.56 1.62-.94l2.39.96c.22.08.47 0 .59-.22l1.92-3.32c.12-.22.07-.47-.12-.61l-2.01-1.58z"/><circle cx="12" cy="12" r="2.6" fill="#c7c7c7"/></svg>
<svg style="left:1864px;top:79px" width="4" height="14" viewBox="0 0 4 14"><g fill="#c7c7c7"><circle cx="2" cy="2" r="1.5"/><circle cx="2" cy="7" r="1.5"/><circle cx="2" cy="12" r="1.5"/></g></svg>
<svg style="left:1888px;top:81px" width="10" height="10" viewBox="0 0 10 10"><path d="M0.5 0.5L9.5 9.5M9.5 0.5L0.5 9.5" stroke="#c7c7c7" stroke-width="1.4"/></svg>
<svg style="left:1288px;top:105px" width="16" height="16" viewBox="0 0 16 16"><circle cx="8" cy="8" r="6.8" fill="none" stroke="#ee675c" stroke-width="1.5"/><rect x="5" y="5" width="6" height="6" rx="0.8" fill="#ee675c"/></svg>
<svg style="left:1316px;top:105px" width="16" height="16" viewBox="0 0 16 16"><circle cx="8" cy="8" r="6.8" fill="none" stroke="#c7c7c7" stroke-width="1.4"/><path d="M3.2 12.8L12.8 3.2" stroke="#c7c7c7" stroke-width="1.4"/></svg>
<div class="a" style="left:1342px;top:106px;width:1px;height:15px;background:#5b5b5b"></div>
<svg style="left:1355px;top:106px" width="15" height="14" viewBox="0 0 15 14"><path d="M0 0H12L7.5 5.5V11.5L4.5 10V5.5Z" fill="#7cacf8"/><circle cx="12.3" cy="11.5" r="1.9" fill="#7cacf8"/></svg>
<svg style="left:1382px;top:105px" width="15" height="15" viewBox="0 0 15 15"><circle cx="5.8" cy="5.8" r="4.6" fill="none" stroke="#c7c7c7" stroke-width="1.5"/><path d="M9.2 9.2L14 14" stroke="#c7c7c7" stroke-width="1.6"/></svg>
<div class="a" style="left:1407px;top:106px;width:1px;height:15px;background:#5b5b5b"></div>
<div class="a" style="left:1512px;top:106px;width:1px;height:15px;background:#5b5b5b"></div>
<div class="a" style="left:1418px;top:107px;width:10px;height:10px;border-radius:2px;border:1px solid #8f8f8f;background:#363636"></div>
<div class="a" style="left:1523px;top:107px;width:10px;height:10px;border-radius:2px;border:1px solid #8f8f8f;background:#363636"></div>
<div class="a" style="left:1741px;top:134px;width:10px;height:10px;border-radius:2px;border:1px solid #8f8f8f;background:#363636"></div>
<div class="a" style="left:1286px;top:184px;width:10px;height:10px;border-radius:2px;border:1px solid #8f8f8f;background:#363636"></div>
<div class="a" style="left:1286px;top:208px;width:12px;height:12px;border-radius:2px;background:#a8c7fa"></div>
<svg style="left:1286px;top:208px" width="12" height="12" viewBox="0 0 12 12"><path d="M2.3 6.2L4.8 8.7L9.8 3.3" fill="none" stroke="#062e6f" stroke-width="1.6"/></svg>
<div class="a" style="left:1602.5px;top:184px;width:10px;height:10px;border-radius:2px;border:1px solid #8f8f8f;background:#363636"></div>
<div class="a" style="left:1602.5px;top:208px;width:10px;height:10px;border-radius:2px;border:1px solid #8f8f8f;background:#363636"></div>
<div class="a" style="left:1619px;top:101px;width:110px;height:22px;border-radius:4px;border:1px solid #5e5e5e"></div>
<svg style="left:1715px;top:110px" width="10" height="6" viewBox="0 0 10 6"><path d="M0.5 0.5H9.5L5 5.5Z" fill="#c7c7c7"/></svg>
<svg style="left:1737px;top:105px" width="17" height="15" viewBox="0 0 17 15"><g fill="none" stroke="#c7c7c7" stroke-width="1.4"><path d="M1 5.5 A10 10 0 0 1 15 5.5"/><path d="M3.5 8 A6.5 6.5 0 0 1 12.5 8"/><path d="M6 10.5 A3 3 0 0 1 7.8 10"/></g><circle cx="12.8" cy="11.5" r="2.4" fill="#c7c7c7"/><circle cx="12.8" cy="11.5" r="1" fill="#282828"/></svg>
<div class="a" style="left:1763px;top:106px;width:1px;height:15px;background:#5b5b5b"></div>
<svg style="left:1776px;top:105px" width="12" height="15" viewBox="0 0 12 15"><path d="M6 1V10M2 5L6 1L10 5M1 11V14H11V11" fill="none" stroke="#c7c7c7" stroke-width="1.6"/></svg>
<svg style="left:1804px;top:105px" width="12" height="15" viewBox="0 0 12 15"><path d="M6 1V10M2 6L6 10L10 6M1 11V14H11V11" fill="none" stroke="#c7c7c7" stroke-width="1.6"/></svg>
<div class="a" style="left:1875px;top:106px;width:1px;height:15px;background:#5b5b5b"></div>
<svg style="left:1885px;top:105px" width="16" height="16" viewBox="0 0 24 24"><path fill="#7cacf8" d="M19.14 12.94c.04-.3.06-.61.06-.94 0-.32-.02-.64-.07-.94l2.03-1.58c.18-.14.23-.41.12-.61l-1.92-3.32c-.12-.22-.37-.29-.59-.22l-2.39.96c-.5-.38-1.03-.7-1.62-.94l-.36-2.54c-.04-.24-.24-.41-.48-.41h-3.84c-.24 0-.43.17-.47.41l-.36 2.54c-.59.24-1.130.57-1.62.94l-2.39-.96c-.22-.08-.47 0-.59.22L2.74 8.87c-.12.21-.08.47.12.61l2.03 1.58c-.05.3-.09.63-.09.94s.02.64.07.94l-2.03 1.58c-.18.14-.23.41-.12.61l1.92 3.32c.12.22.37.29.59.22l2.39-.96c.5.38 1.03.7 1.62.94l.36 2.54c.05.24.24.41.48.41h3.84c.24 0 .44-.17.47-.41l.36-2.54c.59-.24 1.13-.56 1.62-.94l2.39.96c.22.08.47 0 .59-.22l1.92-3.32c.12-.22.07-.47-.12-.61l-2.01-1.58zM12 15.6c-1.98 0-3.6-1.62-3.6-3.6s1.62-3.6 3.6-3.6 3.6 1.62 3.6 3.6-1.62 3.6-3.6 3.6z"/></svg>
<div class="a" style="left:1285px;top:130px;width:444px;height:20px;border-radius:10px;background:#3c3c3c"></div>
<svg style="left:1297px;top:135px" width="9" height="10" viewBox="0 0 9 10"><path d="M0.5 0.8H8.5L5.3 4.6V9.5H3.7V4.6Z" fill="none" stroke="#c7c7c7" stroke-width="1.2"/></svg>
<div class="a" style="left:1802px;top:133px;width:1px;height:14px;background:#5b5b5b"></div>
<svg style="left:1890px;top:137px" width="9" height="6" viewBox="0 0 9 6"><path d="M0.5 0.5H8.5L4.5 5.5Z" fill="#c7c7c7"/></svg>
<div class="a" style="left:1284.2px;top:156px;width:23.6px;height:17px;border-radius:6px;border:1px solid #5e5e5e"></div>
<div class="a" style="left:1319.2px;top:156px;width:65.3px;height:19px;border-radius:6px;background:#004a77"></div>
<div class="a" style="left:1389.3px;top:156px;width:29.3px;height:17px;border-radius:6px;border:1px solid #5e5e5e"></div>
<div class="a" style="left:1425.3px;top:156px;width:28.3px;height:17px;border-radius:6px;border:1px solid #5e5e5e"></div>
<div class="a" style="left:1460.3px;top:156px;width:20.6px;height:17px;border-radius:6px;border:1px solid #5e5e5e"></div>
<div class="a" style="left:1487.3px;top:156px;width:32.3px;height:17px;border-radius:6px;border:1px solid #5e5e5e"></div>
<div class="a" style="left:1526.4px;top:156px;width:28.1px;height:17px;border-radius:6px;border:1px solid #5e5e5e"></div>
<div class="a" style="left:1561.6px;top:156px;width:40.0px;height:17px;border-radius:6px;border:1px solid #5e5e5e"></div>
<div class="a" style="left:1608.5px;top:156px;width:54.0px;height:17px;border-radius:6px;border:1px solid #5e5e5e"></div>
<div class="a" style="left:1669.2px;top:156px;width:43.5px;height:17px;border-radius:6px;border:1px solid #5e5e5e"></div>
<div class="a" style="left:1719.2px;top:156px;width:39.5px;height:17px;border-radius:6px;border:1px solid #5e5e5e"></div>
<div class="a" style="left:1765.2px;top:156px;width:39.2px;height:17px;border-radius:6px;border:1px solid #5e5e5e"></div>
<div class="a" style="left:1314px;top:159px;width:1px;height:13px;background:#5b5b5b"></div>
<svg style="left:1285px;top:340.8px" width="14" height="10" viewBox="0 0 14 10"><g fill="none" stroke="#f28b54" stroke-width="1.5"><path d="M4.2 0.8C2.7 0.8 2.6 1.6 2.6 3C2.6 4.4 2.2 5 0.8 5C2.2 5 2.6 5.6 2.6 7C2.6 8.4 2.7 9.2 4.2 9.2"/><path d="M9.8 0.8C11.3 0.8 11.4 1.6 11.4 3C11.4 4.4 11.8 5 13.2 5C11.8 5 11.4 5.6 11.4 7C11.4 8.4 11.3 9.2 9.8 9.2"/></g><circle cx="7" cy="3.2" r="1" fill="#f28b54"/><path d="M7 5.8V7.6L6.3 8.6" stroke="#f28b54" stroke-width="1.6" fill="none"/></svg>
<svg style="left:1285px;top:361.8px" width="14" height="10" viewBox="0 0 14 10"><g fill="none" stroke="#f28b54" stroke-width="1.5"><path d="M4.2 0.8C2.7 0.8 2.6 1.6 2.6 3C2.6 4.4 2.2 5 0.8 5C2.2 5 2.6 5.6 2.6 7C2.6 8.4 2.7 9.2 4.2 9.2"/><path d="M9.8 0.8C11.3 0.8 11.4 1.6 11.4 3C11.4 4.4 11.8 5 13.2 5C11.8 5 11.4 5.6 11.4 7C11.4 8.4 11.3 9.2 9.8 9.2"/></g><circle cx="7" cy="3.2" r="1" fill="#f28b54"/><path d="M7 5.8V7.6L6.3 8.6" stroke="#f28b54" stroke-width="1.6" fill="none"/></svg>
<svg style="left:1285px;top:382.8px" width="14" height="10" viewBox="0 0 14 10"><g fill="none" stroke="#f28b54" stroke-width="1.5"><path d="M4.2 0.8C2.7 0.8 2.6 1.6 2.6 3C2.6 4.4 2.2 5 0.8 5C2.2 5 2.6 5.6 2.6 7C2.6 8.4 2.7 9.2 4.2 9.2"/><path d="M9.8 0.8C11.3 0.8 11.4 1.6 11.4 3C11.4 4.4 11.8 5 13.2 5C11.8 5 11.4 5.6 11.4 7C11.4 8.4 11.3 9.2 9.8 9.2"/></g><circle cx="7" cy="3.2" r="1" fill="#f28b54"/><path d="M7 5.8V7.6L6.3 8.6" stroke="#f28b54" stroke-width="1.6" fill="none"/></svg>
<svg style="left:1285px;top:403.8px" width="14" height="10" viewBox="0 0 14 10"><g fill="none" stroke="#f28b54" stroke-width="1.5"><path d="M4.2 0.8C2.7 0.8 2.6 1.6 2.6 3C2.6 4.4 2.2 5 0.8 5C2.2 5 2.6 5.6 2.6 7C2.6 8.4 2.7 9.2 4.2 9.2"/><path d="M9.8 0.8C11.3 0.8 11.4 1.6 11.4 3C11.4 4.4 11.8 5 13.2 5C11.8 5 11.4 5.6 11.4 7C11.4 8.4 11.3 9.2 9.8 9.2"/></g><circle cx="7" cy="3.2" r="1" fill="#f28b54"/><path d="M7 5.8V7.6L6.3 8.6" stroke="#f28b54" stroke-width="1.6" fill="none"/></svg>
<svg style="left:1285px;top:424.8px" width="14" height="10" viewBox="0 0 14 10"><g fill="none" stroke="#f28b54" stroke-width="1.5"><path d="M4.2 0.8C2.7 0.8 2.6 1.6 2.6 3C2.6 4.4 2.2 5 0.8 5C2.2 5 2.6 5.6 2.6 7C2.6 8.4 2.7 9.2 4.2 9.2"/><path d="M9.8 0.8C11.3 0.8 11.4 1.6 11.4 3C11.4 4.4 11.8 5 13.2 5C11.8 5 11.4 5.6 11.4 7C11.4 8.4 11.3 9.2 9.8 9.2"/></g><circle cx="7" cy="3.2" r="1" fill="#f28b54"/><path d="M7 5.8V7.6L6.3 8.6" stroke="#f28b54" stroke-width="1.6" fill="none"/></svg>
<svg style="left:1285px;top:445.8px" width="14" height="10" viewBox="0 0 14 10"><g fill="none" stroke="#f28b54" stroke-width="1.5"><path d="M4.2 0.8C2.7 0.8 2.6 1.6 2.6 3C2.6 4.4 2.2 5 0.8 5C2.2 5 2.6 5.6 2.6 7C2.6 8.4 2.7 9.2 4.2 9.2"/><path d="M9.8 0.8C11.3 0.8 11.4 1.6 11.4 3C11.4 4.4 11.8 5 13.2 5C11.8 5 11.4 5.6 11.4 7C11.4 8.4 11.3 9.2 9.8 9.2"/></g><circle cx="7" cy="3.2" r="1" fill="#f28b54"/><path d="M7 5.8V7.6L6.3 8.6" stroke="#f28b54" stroke-width="1.6" fill="none"/></svg>
<svg style="left:1285px;top:466.8px" width="14" height="10" viewBox="0 0 14 10"><g fill="none" stroke="#f28b54" stroke-width="1.5"><path d="M4.2 0.8C2.7 0.8 2.6 1.6 2.6 3C2.6 4.4 2.2 5 0.8 5C2.2 5 2.6 5.6 2.6 7C2.6 8.4 2.7 9.2 4.2 9.2"/><path d="M9.8 0.8C11.3 0.8 11.4 1.6 11.4 3C11.4 4.4 11.8 5 13.2 5C11.8 5 11.4 5.6 11.4 7C11.4 8.4 11.3 9.2 9.8 9.2"/></g><circle cx="7" cy="3.2" r="1" fill="#f28b54"/><path d="M7 5.8V7.6L6.3 8.6" stroke="#f28b54" stroke-width="1.6" fill="none"/></svg>
<svg style="left:1285px;top:487.8px" width="14" height="10" viewBox="0 0 14 10"><g fill="none" stroke="#f28b54" stroke-width="1.5"><path d="M4.2 0.8C2.7 0.8 2.6 1.6 2.6 3C2.6 4.4 2.2 5 0.8 5C2.2 5 2.6 5.6 2.6 7C2.6 8.4 2.7 9.2 4.2 9.2"/><path d="M9.8 0.8C11.3 0.8 11.4 1.6 11.4 3C11.4 4.4 11.8 5 13.2 5C11.8 5 11.4 5.6 11.4 7C11.4 8.4 11.3 9.2 9.8 9.2"/></g><circle cx="7" cy="3.2" r="1" fill="#f28b54"/><path d="M7 5.8V7.6L6.3 8.6" stroke="#f28b54" stroke-width="1.6" fill="none"/></svg>
<svg style="left:1285px;top:508.8px" width="14" height="10" viewBox="0 0 14 10"><g fill="none" stroke="#f28b54" stroke-width="1.5"><path d="M4.2 0.8C2.7 0.8 2.6 1.6 2.6 3C2.6 4.4 2.2 5 0.8 5C2.2 5 2.6 5.6 2.6 7C2.6 8.4 2.7 9.2 4.2 9.2"/><path d="M9.8 0.8C11.3 0.8 11.4 1.6 11.4 3C11.4 4.4 11.8 5 13.2 5C11.8 5 11.4 5.6 11.4 7C11.4 8.4 11.3 9.2 9.8 9.2"/></g><circle cx="7" cy="3.2" r="1" fill="#f28b54"/><path d="M7 5.8V7.6L6.3 8.6" stroke="#f28b54" stroke-width="1.6" fill="none"/></svg>
<svg style="left:1285px;top:529.8px" width="14" height="10" viewBox="0 0 14 10"><g fill="none" stroke="#f28b54" stroke-width="1.5"><path d="M4.2 0.8C2.7 0.8 2.6 1.6 2.6 3C2.6 4.4 2.2 5 0.8 5C2.2 5 2.6 5.6 2.6 7C2.6 8.4 2.7 9.2 4.2 9.2"/><path d="M9.8 0.8C11.3 0.8 11.4 1.6 11.4 3C11.4 4.4 11.8 5 13.2 5C11.8 5 11.4 5.6 11.4 7C11.4 8.4 11.3 9.2 9.8 9.2"/></g><circle cx="7" cy="3.2" r="1" fill="#f28b54"/><path d="M7 5.8V7.6L6.3 8.6" stroke="#f28b54" stroke-width="1.6" fill="none"/></svg>
<svg style="left:1285px;top:550.8px" width="14" height="10" viewBox="0 0 14 10"><g fill="none" stroke="#f28b54" stroke-width="1.5"><path d="M4.2 0.8C2.7 0.8 2.6 1.6 2.6 3C2.6 4.4 2.2 5 0.8 5C2.2 5 2.6 5.6 2.6 7C2.6 8.4 2.7 9.2 4.2 9.2"/><path d="M9.8 0.8C11.3 0.8 11.4 1.6 11.4 3C11.4 4.4 11.8 5 13.2 5C11.8 5 11.4 5.6 11.4 7C11.4 8.4 11.3 9.2 9.8 9.2"/></g><circle cx="7" cy="3.2" r="1" fill="#f28b54"/><path d="M7 5.8V7.6L6.3 8.6" stroke="#f28b54" stroke-width="1.6" fill="none"/></svg>
<svg style="left:1285px;top:571.8px" width="14" height="10" viewBox="0 0 14 10"><g fill="none" stroke="#f28b54" stroke-width="1.5"><path d="M4.2 0.8C2.7 0.8 2.6 1.6 2.6 3C2.6 4.4 2.2 5 0.8 5C2.2 5 2.6 5.6 2.6 7C2.6 8.4 2.7 9.2 4.2 9.2"/><path d="M9.8 0.8C11.3 0.8 11.4 1.6 11.4 3C11.4 4.4 11.8 5 13.2 5C11.8 5 11.4 5.6 11.4 7C11.4 8.4 11.3 9.2 9.8 9.2"/></g><circle cx="7" cy="3.2" r="1" fill="#f28b54"/><path d="M7 5.8V7.6L6.3 8.6" stroke="#f28b54" stroke-width="1.6" fill="none"/></svg>
<svg style="left:1285px;top:592.8px" width="14" height="10" viewBox="0 0 14 10"><g fill="none" stroke="#f28b54" stroke-width="1.5"><path d="M4.2 0.8C2.7 0.8 2.6 1.6 2.6 3C2.6 4.4 2.2 5 0.8 5C2.2 5 2.6 5.6 2.6 7C2.6 8.4 2.7 9.2 4.2 9.2"/><path d="M9.8 0.8C11.3 0.8 11.4 1.6 11.4 3C11.4 4.4 11.8 5 13.2 5C11.8 5 11.4 5.6 11.4 7C11.4 8.4 11.3 9.2 9.8 9.2"/></g><circle cx="7" cy="3.2" r="1" fill="#f28b54"/><path d="M7 5.8V7.6L6.3 8.6" stroke="#f28b54" stroke-width="1.6" fill="none"/></svg>
<svg style="left:1285px;top:613.8px" width="14" height="10" viewBox="0 0 14 10"><g fill="none" stroke="#f28b54" stroke-width="1.5"><path d="M4.2 0.8C2.7 0.8 2.6 1.6 2.6 3C2.6 4.4 2.2 5 0.8 5C2.2 5 2.6 5.6 2.6 7C2.6 8.4 2.7 9.2 4.2 9.2"/><path d="M9.8 0.8C11.3 0.8 11.4 1.6 11.4 3C11.4 4.4 11.8 5 13.2 5C11.8 5 11.4 5.6 11.4 7C11.4 8.4 11.3 9.2 9.8 9.2"/></g><circle cx="7" cy="3.2" r="1" fill="#f28b54"/><path d="M7 5.8V7.6L6.3 8.6" stroke="#f28b54" stroke-width="1.6" fill="none"/></svg>
<svg style="left:1285px;top:634.8px" width="14" height="10" viewBox="0 0 14 10"><g fill="none" stroke="#f28b54" stroke-width="1.5"><path d="M4.2 0.8C2.7 0.8 2.6 1.6 2.6 3C2.6 4.4 2.2 5 0.8 5C2.2 5 2.6 5.6 2.6 7C2.6 8.4 2.7 9.2 4.2 9.2"/><path d="M9.8 0.8C11.3 0.8 11.4 1.6 11.4 3C11.4 4.4 11.8 5 13.2 5C11.8 5 11.4 5.6 11.4 7C11.4 8.4 11.3 9.2 9.8 9.2"/></g><circle cx="7" cy="3.2" r="1" fill="#f28b54"/><path d="M7 5.8V7.6L6.3 8.6" stroke="#f28b54" stroke-width="1.6" fill="none"/></svg>
<svg style="left:1285px;top:655.8px" width="14" height="10" viewBox="0 0 14 10"><g fill="none" stroke="#f28b54" stroke-width="1.5"><path d="M4.2 0.8C2.7 0.8 2.6 1.6 2.6 3C2.6 4.4 2.2 5 0.8 5C2.2 5 2.6 5.6 2.6 7C2.6 8.4 2.7 9.2 4.2 9.2"/><path d="M9.8 0.8C11.3 0.8 11.4 1.6 11.4 3C11.4 4.4 11.8 5 13.2 5C11.8 5 11.4 5.6 11.4 7C11.4 8.4 11.3 9.2 9.8 9.2"/></g><circle cx="7" cy="3.2" r="1" fill="#f28b54"/><path d="M7 5.8V7.6L6.3 8.6" stroke="#f28b54" stroke-width="1.6" fill="none"/></svg>
<div class="a" style="left:1392px;top:980px;width:1px;height:14px;background:#5b5b5b"></div>
<div class="a" style="left:1562px;top:980px;width:1px;height:14px;background:#5b5b5b"></div>
<div class="t" style="left:185.30px;top:7px;font-size:15px;line-height:15px;color:#e3e3e3;transform:scaleX(0.9357);">uatamrit.piramalswasthya.org</div>
<div class="t" style="left:369.50px;top:7px;font-size:15px;line-height:15px;color:#9a9a9a;transform:scaleX(0.9314);">/ecd/associate-anm-mo/agents-innerpage</div>
<div class="t" style="left:1689.00px;top:7px;font-size:15px;line-height:15px;color:#e3e3e3;transform:scaleX(0.8744);">Work</div>
<div class="t" style="left:1748.84px;top:7px;font-size:15px;line-height:15px;color:#e3e3e3;transform:scaleX(0.8579);">New Chrome available</div>
<div class="t" style="left:4.30px;top:44px;font-size:15px;line-height:15px;color:#d6e3ff;transform:scaleX(0.9564);">AMRIT-PR</div>
<div class="t" style="left:161.48px;top:44px;font-size:15px;line-height:15px;color:#e3e3e3;transform:scaleX(1.0238);">Meet - jpd-bne…</div>
<div class="t" style="left:320.00px;top:44px;font-size:15px;line-height:15px;color:#e3e3e3;transform:scaleX(0.9691);">Web Dev</div>
<div class="t" style="left:423.00px;top:44px;font-size:15px;line-height:15px;color:#e3e3e3;transform:scaleX(0.9542);">SityX</div>
<div class="t" style="left:499.00px;top:44px;font-size:15px;line-height:15px;color:#e3e3e3;transform:scaleX(0.9654);">ShikshaLokam</div>
<div class="t" style="left:636.63px;top:44px;font-size:15px;line-height:15px;color:#e3e3e3;transform:scaleX(0.9659);">MITRA</div>
<div class="t" style="left:720.00px;top:44px;font-size:15px;line-height:15px;color:#e3e3e3;transform:scaleX(0.9623);">SMS Bookmarks</div>
<div class="t" style="left:870.00px;top:44px;font-size:15px;line-height:15px;color:#e3e3e3;transform:scaleX(0.9681);">JavaScript</div>
<div class="t" style="left:977.30px;top:44px;font-size:15px;line-height:15px;color:#e3e3e3;transform:scaleX(1.0138);">Open source t…</div>
<div class="t" style="left:1131.40px;top:44px;font-size:15px;line-height:15px;color:#e3e3e3;transform:scaleX(1.0232);">Observation</div>
<div class="t" style="left:1252.00px;top:44px;font-size:15px;line-height:15px;color:#e3e3e3;transform:scaleX(1.0040);">Page Lifecycle…</div>
<div class="t" style="left:1407.00px;top:44px;font-size:15px;line-height:15px;color:#e3e3e3;transform:scaleX(1.0180);">Sunbird Portal…</div>
<div class="t" style="left:1561.60px;top:44px;font-size:15px;line-height:15px;color:#e3e3e3;transform:scaleX(1.0103);">The Evolution…</div>
<div class="t" style="left:1801.40px;top:44px;font-size:15px;line-height:15px;color:#e3e3e3;">All Bookmarks</div>
<div class="t" style="left:1354.45px;top:80px;font-size:13px;line-height:13px;color:#e3e3e3;transform:scaleX(0.9480);">Elements</div>
<div class="t" style="left:1427.30px;top:80px;font-size:13px;line-height:13px;color:#e3e3e3;transform:scaleX(0.9185);">Console</div>
<div class="t" style="left:1491.00px;top:80px;font-size:13px;line-height:13px;color:#e3e3e3;transform:scaleX(0.9234);">Sources</div>
<div class="t" style="left:1554.20px;top:80px;font-size:13px;line-height:13px;color:#a8c7fa;">Network</div>
<div class="t" style="left:1622.33px;top:80px;font-size:13px;line-height:13px;color:#e3e3e3;transform:scaleX(0.9660);">Performance</div>
<div class="t" style="left:1778.00px;top:80px;font-size:13px;line-height:13px;color:#e3e3e3;">6</div>
<div class="t" style="left:1803.80px;top:80px;font-size:13px;line-height:13px;color:#e3e3e3;transform:scaleX(0.8857);">5</div>
<div class="t" style="left:1435.78px;top:107px;font-size:13px;line-height:13px;color:#e3e3e3;transform:scaleX(0.9185);">Preserve log</div>
<div class="t" style="left:1540.70px;top:107px;font-size:13px;line-height:13px;color:#e3e3e3;transform:scaleX(0.9002);">Disable cache</div>
<div class="t" style="left:1627.38px;top:107px;font-size:13px;line-height:13px;color:#e3e3e3;transform:scaleX(1.0224);">No throttling</div>
<div class="t" style="left:1312.02px;top:133px;font-size:13px;line-height:13px;color:#a0a0a0;transform:scaleX(0.9804);">Filter</div>
<div class="t" style="left:1758.20px;top:133px;font-size:13px;line-height:13px;color:#e3e3e3;transform:scaleX(0.9968);">Invert</div>
<div class="t" style="left:1820.22px;top:133px;font-size:13px;line-height:13px;color:#e3e3e3;transform:scaleX(0.9814);">More filters</div>
<div class="t" style="left:1290.77px;top:160px;font-size:12.5px;line-height:12.5px;color:#e3e3e3;transform:scaleX(0.9500);">All</div>
<div class="t" style="left:1322.35px;top:160px;font-size:12.5px;line-height:12.5px;color:#c2e7ff;transform:scaleX(0.9500);">Fetch/XHR</div>
<div class="t" style="left:1394.03px;top:160px;font-size:12.5px;line-height:12.5px;color:#e3e3e3;transform:scaleX(0.9500);">Doc</div>
<div class="t" style="left:1428.40px;top:160px;font-size:12.5px;line-height:12.5px;color:#e3e3e3;transform:scaleX(0.9500);">CSS</div>
<div class="t" style="left:1464.83px;top:160px;font-size:12.5px;line-height:12.5px;color:#e3e3e3;transform:scaleX(0.9500);">JS</div>
<div class="t" style="left:1491.84px;top:160px;font-size:12.5px;line-height:12.5px;color:#e3e3e3;transform:scaleX(0.9500);">Font</div>
<div class="t" style="left:1531.05px;top:160px;font-size:12.5px;line-height:12.5px;color:#e3e3e3;transform:scaleX(0.9500);">Img</div>
<div class="t" style="left:1565.93px;top:160px;font-size:12.5px;line-height:12.5px;color:#e3e3e3;transform:scaleX(0.9500);">Media</div>
<div class="t" style="left:1613.34px;top:160px;font-size:12.5px;line-height:12.5px;color:#e3e3e3;transform:scaleX(0.9500);">Manifest</div>
<div class="t" style="left:1673.55px;top:160px;font-size:12.5px;line-height:12.5px;color:#e3e3e3;transform:scaleX(0.9500);">Socket</div>
<div class="t" style="left:1723.55px;top:160px;font-size:12.5px;line-height:12.5px;color:#e3e3e3;transform:scaleX(0.9500);">Wasm</div>
<div class="t" style="left:1771.03px;top:160px;font-size:12.5px;line-height:12.5px;color:#e3e3e3;transform:scaleX(0.9500);">Other</div>
<div class="t" style="left:1303.36px;top:183px;font-size:13px;line-height:13px;color:#e3e3e3;transform:scaleX(0.9354);">Big request rows</div>
<div class="t" style="left:1304.30px;top:207px;font-size:13px;line-height:13px;color:#e3e3e3;transform:scaleX(0.9071);">Overview</div>
<div class="t" style="left:1620.00px;top:183px;font-size:13px;line-height:13px;color:#e3e3e3;transform:scaleX(0.8881);">Group by frame</div>
<div class="t" style="left:1620.00px;top:207px;font-size:13px;line-height:13px;color:#e3e3e3;transform:scaleX(0.8933);">Screenshots</div>
<div style="position:absolute;left:1280.5px;top:231px;width:70.0px;height:14.5px;overflow:hidden"><div class="t" style="left:28.95px;top:0;font-size:10.5px;line-height:10.5px;color:#c7c7c7;transform:scaleX(0.9000);">5,000 ms</div></div>
<div style="position:absolute;left:1350.6px;top:231px;width:70.0px;height:14.5px;overflow:hidden"><div class="t" style="left:23.70px;top:0;font-size:10.5px;line-height:10.5px;color:#c7c7c7;transform:scaleX(0.9000);">10,000 ms</div></div>
<div style="position:absolute;left:1421.4px;top:231px;width:70.0px;height:14.5px;overflow:hidden"><div class="t" style="left:23.70px;top:0;font-size:10.5px;line-height:10.5px;color:#c7c7c7;transform:scaleX(0.9000);">15,000 ms</div></div>
<div style="position:absolute;left:1491.4px;top:231px;width:70.0px;height:14.5px;overflow:hidden"><div class="t" style="left:23.70px;top:0;font-size:10.5px;line-height:10.5px;color:#c7c7c7;transform:scaleX(0.9000);">20,000 ms</div></div>
<div style="position:absolute;left:1562.4px;top:231px;width:70.0px;height:14.5px;overflow:hidden"><div class="t" style="left:23.70px;top:0;font-size:10.5px;line-height:10.5px;color:#c7c7c7;transform:scaleX(0.9000);">25,000 ms</div></div>
<div style="position:absolute;left:1632.7px;top:231px;width:70.0px;height:14.5px;overflow:hidden"><div class="t" style="left:23.70px;top:0;font-size:10.5px;line-height:10.5px;color:#c7c7c7;transform:scaleX(0.9000);">30,000 ms</div></div>
<div style="position:absolute;left:1703.5px;top:231px;width:70.0px;height:14.5px;overflow:hidden"><div class="t" style="left:23.70px;top:0;font-size:10.5px;line-height:10.5px;color:#c7c7c7;transform:scaleX(0.9000);">35,000 ms</div></div>
<div style="position:absolute;left:1773.6px;top:231px;width:70.0px;height:14.5px;overflow:hidden"><div class="t" style="left:23.70px;top:0;font-size:10.5px;line-height:10.5px;color:#c7c7c7;transform:scaleX(0.9000);">40,000 ms</div></div>
<div style="position:absolute;left:1844px;top:231px;width:62px;height:14.5px;overflow:hidden"><div class="t" style="left:23.70px;top:0;font-size:10.5px;line-height:10.5px;color:#c7c7c7;transform:scaleX(0.9000);">45,000 ms</div></div>
<div class="t" style="left:1285.00px;top:315px;font-size:12px;line-height:12px;color:#e3e3e3;transform:scaleX(0.8041);">Name</div>
<div class="t" style="left:1495.20px;top:315px;font-size:12px;line-height:12px;color:#e3e3e3;transform:scaleX(1.0622);">Method</div>
<div class="t" style="left:1558.70px;top:315px;font-size:12px;line-height:12px;color:#e3e3e3;transform:scaleX(0.9847);">Status</div>
<div class="t" style="left:1622.40px;top:315px;font-size:12px;line-height:12px;color:#e3e3e3;transform:scaleX(0.9415);">Type</div>
<div class="t" style="left:1683.39px;top:315px;font-size:12px;line-height:12px;color:#e3e3e3;transform:scaleX(1.1081);">Initiator</div>
<div class="t" style="left:1790.00px;top:315px;font-size:12px;line-height:12px;color:#e3e3e3;transform:scaleX(0.8788);">Size</div>
<div class="t" style="left:1853.30px;top:315px;font-size:12px;line-height:12px;color:#e3e3e3;transform:scaleX(1.0058);">Time</div>
<div class="t" style="left:1303.30px;top:340px;font-size:12px;line-height:12px;color:#e3e3e3;transform:scaleX(1.0176);">110</div>
<div class="t" style="left:1495.20px;top:340px;font-size:12px;line-height:12px;color:#e3e3e3;transform:scaleX(0.8209);">GET</div>
<div class="t" style="left:1558.70px;top:340px;font-size:12px;line-height:12px;color:#e3e3e3;transform:scaleX(0.9633);">200</div>
<div class="t" style="left:1622.40px;top:340px;font-size:12px;line-height:12px;color:#e3e3e3;transform:scaleX(1.0196);">xhr</div>
<div style="position:absolute;left:1684px;top:340px;width:100px;height:16px;overflow:hidden"><div class="t" style="left:0.50px;top:0;font-size:12px;line-height:12px;color:#e3e3e3;transform:scaleX(0.9700);text-decoration:underline;">polyfills.145b4e8ba3c4d.js</div></div>
<div class="t" style="left:1811.20px;top:340px;font-size:12px;line-height:12px;color:#e3e3e3;transform:scaleX(0.9643);">0.5 kB</div>
<div style="position:absolute;left:1849px;top:340px;width:57px;height:16px;overflow:hidden"><div class="t" style="left:21.00px;top:0;font-size:12px;line-height:12px;color:#e3e3e3;transform:scaleX(0.9500);">263 ms</div></div>
<div class="t" style="left:1303.30px;top:361px;font-size:12px;line-height:12px;color:#e3e3e3;transform:scaleX(1.0176);">110</div>
<div class="t" style="left:1495.20px;top:361px;font-size:12px;line-height:12px;color:#e3e3e3;transform:scaleX(0.8209);">GET</div>
<div class="t" style="left:1558.70px;top:361px;font-size:12px;line-height:12px;color:#e3e3e3;transform:scaleX(0.9633);">200</div>
<div class="t" style="left:1622.40px;top:361px;font-size:12px;line-height:12px;color:#e3e3e3;transform:scaleX(1.0196);">xhr</div>
<div style="position:absolute;left:1684px;top:361px;width:100px;height:16px;overflow:hidden"><div class="t" style="left:0.50px;top:0;font-size:12px;line-height:12px;color:#e3e3e3;transform:scaleX(0.9700);text-decoration:underline;">polyfills.145b4e8ba3c4d.js</div></div>
<div class="t" style="left:1811.20px;top:361px;font-size:12px;line-height:12px;color:#e3e3e3;transform:scaleX(0.9643);">0.5 kB</div>
<div style="position:absolute;left:1849px;top:361px;width:57px;height:16px;overflow:hidden"><div class="t" style="left:21.00px;top:0;font-size:12px;line-height:12px;color:#e3e3e3;transform:scaleX(0.9500);">218 ms</div></div>
<div class="t" style="left:1303.30px;top:382px;font-size:12px;line-height:12px;color:#e3e3e3;transform:scaleX(1.0176);">110</div>
<div class="t" style="left:1495.20px;top:382px;font-size:12px;line-height:12px;color:#e3e3e3;transform:scaleX(0.8209);">GET</div>
<div class="t" style="left:1558.70px;top:382px;font-size:12px;line-height:12px;color:#e3e3e3;transform:scaleX(0.9633);">200</div>
<div class="t" style="left:1622.40px;top:382px;font-size:12px;line-height:12px;color:#e3e3e3;transform:scaleX(1.0196);">xhr</div>
<div style="position:absolute;left:1684px;top:382px;width:100px;height:16px;overflow:hidden"><div class="t" style="left:0.50px;top:0;font-size:12px;line-height:12px;color:#e3e3e3;transform:scaleX(0.9700);text-decoration:underline;">polyfills.145b4e8ba3c4d.js</div></div>
<div class="t" style="left:1811.20px;top:382px;font-size:12px;line-height:12px;color:#e3e3e3;transform:scaleX(0.9643);">0.5 kB</div>
<div style="position:absolute;left:1849px;top:382px;width:57px;height:16px;overflow:hidden"><div class="t" style="left:21.00px;top:0;font-size:12px;line-height:12px;color:#e3e3e3;transform:scaleX(0.9500);">121 ms</div></div>
<div class="t" style="left:1303.30px;top:403px;font-size:12px;line-height:12px;color:#e3e3e3;transform:scaleX(1.0176);">110</div>
<div class="t" style="left:1495.20px;top:403px;font-size:12px;line-height:12px;color:#e3e3e3;transform:scaleX(0.8209);">GET</div>
<div class="t" style="left:1558.70px;top:403px;font-size:12px;line-height:12px;color:#e3e3e3;transform:scaleX(0.9633);">200</div>
<div class="t" style="left:1622.40px;top:403px;font-size:12px;line-height:12px;color:#e3e3e3;transform:scaleX(1.0196);">xhr</div>
<div style="position:absolute;left:1684px;top:403px;width:100px;height:16px;overflow:hidden"><div class="t" style="left:0.50px;top:0;font-size:12px;line-height:12px;color:#e3e3e3;transform:scaleX(0.9700);text-decoration:underline;">polyfills.145b4e8ba3c4d.js</div></div>
<div class="t" style="left:1811.20px;top:403px;font-size:12px;line-height:12px;color:#e3e3e3;transform:scaleX(0.9643);">0.5 kB</div>
<div style="position:absolute;left:1849px;top:403px;width:57px;height:16px;overflow:hidden"><div class="t" style="left:27.60px;top:0;font-size:12px;line-height:12px;color:#e3e3e3;transform:scaleX(0.9500);">50 ms</div></div>
<div class="t" style="left:1303.30px;top:424px;font-size:12px;line-height:12px;color:#e3e3e3;transform:scaleX(1.0381);">getAgentState</div>
<div class="t" style="left:1495.20px;top:424px;font-size:12px;line-height:12px;color:#e3e3e3;transform:scaleX(0.8698);">POST</div>
<div class="t" style="left:1558.70px;top:424px;font-size:12px;line-height:12px;color:#e3e3e3;transform:scaleX(0.9633);">200</div>
<div class="t" style="left:1622.40px;top:424px;font-size:12px;line-height:12px;color:#e3e3e3;transform:scaleX(1.0196);">xhr</div>
<div style="position:absolute;left:1684px;top:424px;width:100px;height:16px;overflow:hidden"><div class="t" style="left:0.50px;top:0;font-size:12px;line-height:12px;color:#e3e3e3;transform:scaleX(0.9700);text-decoration:underline;">polyfills.145b4e8ba3c4d.js</div></div>
<div class="t" style="left:1811.20px;top:424px;font-size:12px;line-height:12px;color:#e3e3e3;transform:scaleX(0.9643);">0.7 kB</div>
<div style="position:absolute;left:1849px;top:424px;width:57px;height:16px;overflow:hidden"><div class="t" style="left:21.00px;top:0;font-size:12px;line-height:12px;color:#e3e3e3;transform:scaleX(0.9500);">104 ms</div></div>
<div class="t" style="left:1303.30px;top:445px;font-size:12px;line-height:12px;color:#e3e3e3;transform:scaleX(1.0381);">getAgentState</div>
<div class="t" style="left:1495.20px;top:445px;font-size:12px;line-height:12px;color:#e3e3e3;transform:scaleX(0.8698);">POST</div>
<div class="t" style="left:1558.70px;top:445px;font-size:12px;line-height:12px;color:#e3e3e3;transform:scaleX(0.9633);">200</div>
<div class="t" style="left:1622.40px;top:445px;font-size:12px;line-height:12px;color:#e3e3e3;transform:scaleX(1.0196);">xhr</div>
<div style="position:absolute;left:1684px;top:445px;width:100px;height:16px;overflow:hidden"><div class="t" style="left:0.50px;top:0;font-size:12px;line-height:12px;color:#e3e3e3;transform:scaleX(0.9700);text-decoration:underline;">polyfills.145b4e8ba3c4d.js</div></div>
<div class="t" style="left:1811.20px;top:445px;font-size:12px;line-height:12px;color:#e3e3e3;transform:scaleX(0.9643);">0.7 kB</div>
<div style="position:absolute;left:1849px;top:445px;width:57px;height:16px;overflow:hidden"><div class="t" style="left:27.60px;top:0;font-size:12px;line-height:12px;color:#e3e3e3;transform:scaleX(0.9500);">90 ms</div></div>
<div class="t" style="left:1303.30px;top:466px;font-size:12px;line-height:12px;color:#e3e3e3;transform:scaleX(1.0381);">getAgentState</div>
<div class="t" style="left:1495.20px;top:466px;font-size:12px;line-height:12px;color:#e3e3e3;transform:scaleX(0.8698);">POST</div>
<div class="t" style="left:1558.70px;top:466px;font-size:12px;line-height:12px;color:#e3e3e3;transform:scaleX(0.9633);">200</div>
<div class="t" style="left:1622.40px;top:466px;font-size:12px;line-height:12px;color:#e3e3e3;transform:scaleX(1.0196);">xhr</div>
<div style="position:absolute;left:1684px;top:466px;width:100px;height:16px;overflow:hidden"><div class="t" style="left:0.50px;top:0;font-size:12px;line-height:12px;color:#e3e3e3;transform:scaleX(0.9700);text-decoration:underline;">polyfills.145b4e8ba3c4d.js</div></div>
<div class="t" style="left:1811.20px;top:466px;font-size:12px;line-height:12px;color:#e3e3e3;transform:scaleX(0.9643);">0.7 kB</div>
<div style="position:absolute;left:1849px;top:466px;width:57px;height:16px;overflow:hidden"><div class="t" style="left:27.60px;top:0;font-size:12px;line-height:12px;color:#e3e3e3;transform:scaleX(0.9500);">79 ms</div></div>
<div class="t" style="left:1303.30px;top:487px;font-size:12px;line-height:12px;color:#e3e3e3;transform:scaleX(1.0381);">getAgentState</div>
<div class="t" style="left:1495.20px;top:487px;font-size:12px;line-height:12px;color:#e3e3e3;transform:scaleX(0.8698);">POST</div>
<div class="t" style="left:1558.70px;top:487px;font-size:12px;line-height:12px;color:#e3e3e3;transform:scaleX(0.9633);">200</div>
<div class="t" style="left:1622.40px;top:487px;font-size:12px;line-height:12px;color:#e3e3e3;transform:scaleX(1.0196);">xhr</div>
<div style="position:absolute;left:1684px;top:487px;width:100px;height:16px;overflow:hidden"><div class="t" style="left:0.50px;top:0;font-size:12px;line-height:12px;color:#e3e3e3;transform:scaleX(0.9700);text-decoration:underline;">polyfills.145b4e8ba3c4d.js</div></div>
<div class="t" style="left:1811.20px;top:487px;font-size:12px;line-height:12px;color:#e3e3e3;transform:scaleX(0.9643);">0.7 kB</div>
<div style="position:absolute;left:1849px;top:487px;width:57px;height:16px;overflow:hidden"><div class="t" style="left:27.60px;top:0;font-size:12px;line-height:12px;color:#e3e3e3;transform:scaleX(0.9500);">77 ms</div></div>
<div class="t" style="left:1303.30px;top:508px;font-size:12px;line-height:12px;color:#e3e3e3;transform:scaleX(1.0381);">getAgentState</div>
<div class="t" style="left:1495.20px;top:508px;font-size:12px;line-height:12px;color:#e3e3e3;transform:scaleX(0.8698);">POST</div>
<div class="t" style="left:1558.70px;top:508px;font-size:12px;line-height:12px;color:#e3e3e3;transform:scaleX(0.9633);">200</div>
<div class="t" style="left:1622.40px;top:508px;font-size:12px;line-height:12px;color:#e3e3e3;transform:scaleX(1.0196);">xhr</div>
<div style="position:absolute;left:1684px;top:508px;width:100px;height:16px;overflow:hidden"><div class="t" style="left:0.50px;top:0;font-size:12px;line-height:12px;color:#e3e3e3;transform:scaleX(0.9700);text-decoration:underline;">polyfills.145b4e8ba3c4d.js</div></div>
<div class="t" style="left:1811.20px;top:508px;font-size:12px;line-height:12px;color:#e3e3e3;transform:scaleX(0.9643);">0.7 kB</div>
<div style="position:absolute;left:1849px;top:508px;width:57px;height:16px;overflow:hidden"><div class="t" style="left:27.60px;top:0;font-size:12px;line-height:12px;color:#e3e3e3;transform:scaleX(0.9500);">88 ms</div></div>
<div class="t" style="left:1303.30px;top:529px;font-size:12px;line-height:12px;color:#e3e3e3;transform:scaleX(1.0381);">getAgentState</div>
<div class="t" style="left:1495.20px;top:529px;font-size:12px;line-height:12px;color:#e3e3e3;transform:scaleX(0.8698);">POST</div>
<div class="t" style="left:1558.70px;top:529px;font-size:12px;line-height:12px;color:#e3e3e3;transform:scaleX(0.9633);">200</div>
<div class="t" style="left:1622.40px;top:529px;font-size:12px;line-height:12px;color:#e3e3e3;transform:scaleX(1.0196);">xhr</div>
<div style="position:absolute;left:1684px;top:529px;width:100px;height:16px;overflow:hidden"><div class="t" style="left:0.50px;top:0;font-size:12px;line-height:12px;color:#e3e3e3;transform:scaleX(0.9700);text-decoration:underline;">polyfills.145b4e8ba3c4d.js</div></div>
<div class="t" style="left:1811.20px;top:529px;font-size:12px;line-height:12px;color:#e3e3e3;transform:scaleX(0.9643);">0.7 kB</div>
<div style="position:absolute;left:1849px;top:529px;width:57px;height:16px;overflow:hidden"><div class="t" style="left:27.60px;top:0;font-size:12px;line-height:12px;color:#e3e3e3;transform:scaleX(0.9500);">85 ms</div></div>
<div class="t" style="left:1303.30px;top:550px;font-size:12px;line-height:12px;color:#e3e3e3;transform:scaleX(0.9850);">closeCall</div>
<div class="t" style="left:1495.20px;top:550px;font-size:12px;line-height:12px;color:#e3e3e3;transform:scaleX(0.8698);">POST</div>
<div class="t" style="left:1558.70px;top:550px;font-size:12px;line-height:12px;color:#e3e3e3;transform:scaleX(0.9633);">200</div>
<div class="t" style="left:1622.40px;top:550px;font-size:12px;line-height:12px;color:#e3e3e3;transform:scaleX(1.0196);">xhr</div>
<div style="position:absolute;left:1684px;top:550px;width:100px;height:16px;overflow:hidden"><div class="t" style="left:0.50px;top:0;font-size:12px;line-height:12px;color:#e3e3e3;transform:scaleX(0.9700);text-decoration:underline;">polyfills.145b4e8ba3c4d.js</div></div>
<div class="t" style="left:1811.20px;top:550px;font-size:12px;line-height:12px;color:#e3e3e3;transform:scaleX(0.9643);">0.4 kB</div>
<div style="position:absolute;left:1849px;top:550px;width:57px;height:16px;overflow:hidden"><div class="t" style="left:28.70px;top:0;font-size:12px;line-height:12px;color:#e3e3e3;transform:scaleX(0.9500);">1.31 s</div></div>
<div class="t" style="left:1303.30px;top:571px;font-size:12px;line-height:12px;color:#e3e3e3;transform:scaleX(0.9850);">closeCall</div>
<div class="t" style="left:1495.20px;top:571px;font-size:12px;line-height:12px;color:#e3e3e3;transform:scaleX(0.8698);">POST</div>
<div class="t" style="left:1558.70px;top:571px;font-size:12px;line-height:12px;color:#e3e3e3;transform:scaleX(0.9633);">200</div>
<div class="t" style="left:1622.40px;top:571px;font-size:12px;line-height:12px;color:#e3e3e3;transform:scaleX(1.0196);">xhr</div>
<div style="position:absolute;left:1684px;top:571px;width:100px;height:16px;overflow:hidden"><div class="t" style="left:0.50px;top:0;font-size:12px;line-height:12px;color:#e3e3e3;transform:scaleX(0.9700);text-decoration:underline;">polyfills.145b4e8ba3c4d.js</div></div>
<div class="t" style="left:1811.20px;top:571px;font-size:12px;line-height:12px;color:#e3e3e3;transform:scaleX(0.9643);">0.1 kB</div>
<div style="position:absolute;left:1849px;top:571px;width:57px;height:16px;overflow:hidden"><div class="t" style="left:21.00px;top:0;font-size:12px;line-height:12px;color:#e3e3e3;transform:scaleX(0.9500);">658 ms</div></div>
<div class="t" style="left:1303.30px;top:592px;font-size:12px;line-height:12px;color:#e3e3e3;transform:scaleX(1.0141);">1186</div>
<div class="t" style="left:1495.20px;top:592px;font-size:12px;line-height:12px;color:#e3e3e3;transform:scaleX(0.8209);">GET</div>
<div class="t" style="left:1558.70px;top:592px;font-size:12px;line-height:12px;color:#e3e3e3;transform:scaleX(0.9633);">200</div>
<div class="t" style="left:1622.40px;top:592px;font-size:12px;line-height:12px;color:#e3e3e3;transform:scaleX(1.0196);">xhr</div>
<div style="position:absolute;left:1684px;top:592px;width:100px;height:16px;overflow:hidden"><div class="t" style="left:0.50px;top:0;font-size:12px;line-height:12px;color:#e3e3e3;transform:scaleX(0.9700);text-decoration:underline;">polyfills.145b4e8ba3c4d.js</div></div>
<div class="t" style="left:1804.90px;top:592px;font-size:12px;line-height:12px;color:#e3e3e3;transform:scaleX(0.9609);">22.7 kB</div>
<div style="position:absolute;left:1849px;top:592px;width:57px;height:16px;overflow:hidden"><div class="t" style="left:21.00px;top:0;font-size:12px;line-height:12px;color:#e3e3e3;transform:scaleX(0.9500);">223 ms</div></div>
<div class="t" style="left:1303.30px;top:613px;font-size:12px;line-height:12px;color:#e3e3e3;transform:scaleX(1.0141);">1186</div>
<div class="t" style="left:1495.20px;top:613px;font-size:12px;line-height:12px;color:#e3e3e3;transform:scaleX(0.8209);">GET</div>
<div class="t" style="left:1558.70px;top:613px;font-size:12px;line-height:12px;color:#e3e3e3;transform:scaleX(0.9633);">200</div>
<div class="t" style="left:1622.40px;top:613px;font-size:12px;line-height:12px;color:#e3e3e3;transform:scaleX(1.0196);">xhr</div>
<div style="position:absolute;left:1684px;top:613px;width:100px;height:16px;overflow:hidden"><div class="t" style="left:0.50px;top:0;font-size:12px;line-height:12px;color:#e3e3e3;transform:scaleX(0.9700);text-decoration:underline;">polyfills.145b4e8ba3c4d.js</div></div>
<div class="t" style="left:1804.90px;top:613px;font-size:12px;line-height:12px;color:#e3e3e3;transform:scaleX(0.9609);">22.7 kB</div>
<div style="position:absolute;left:1849px;top:613px;width:57px;height:16px;overflow:hidden"><div class="t" style="left:21.00px;top:0;font-size:12px;line-height:12px;color:#e3e3e3;transform:scaleX(0.9500);">433 ms</div></div>
<div class="t" style="left:1303.30px;top:634px;font-size:12px;line-height:12px;color:#e3e3e3;transform:scaleX(1.0141);">1186</div>
<div class="t" style="left:1495.20px;top:634px;font-size:12px;line-height:12px;color:#e3e3e3;transform:scaleX(0.8209);">GET</div>
<div class="t" style="left:1558.70px;top:634px;font-size:12px;line-height:12px;color:#e3e3e3;transform:scaleX(0.9633);">200</div>
<div class="t" style="left:1622.40px;top:634px;font-size:12px;line-height:12px;color:#e3e3e3;transform:scaleX(1.0196);">xhr</div>
<div style="position:absolute;left:1684px;top:634px;width:100px;height:16px;overflow:hidden"><div class="t" style="left:0.50px;top:0;font-size:12px;line-height:12px;color:#e3e3e3;transform:scaleX(0.9700);text-decoration:underline;">polyfills.145b4e8ba3c4d.js</div></div>
<div class="t" style="left:1804.90px;top:634px;font-size:12px;line-height:12px;color:#e3e3e3;transform:scaleX(0.9609);">22.7 kB</div>
<div style="position:absolute;left:1849px;top:634px;width:57px;height:16px;overflow:hidden"><div class="t" style="left:21.00px;top:0;font-size:12px;line-height:12px;color:#e3e3e3;transform:scaleX(0.9500);">644 ms</div></div>
<div class="t" style="left:1303.30px;top:655px;font-size:12px;line-height:12px;color:#e3e3e3;transform:scaleX(1.0381);">getAgentState</div>
<div class="t" style="left:1495.20px;top:655px;font-size:12px;line-height:12px;color:#e3e3e3;transform:scaleX(0.8698);">POST</div>
<div class="t" style="left:1558.70px;top:655px;font-size:12px;line-height:12px;color:#e3e3e3;transform:scaleX(0.9633);">200</div>
<div class="t" style="left:1622.40px;top:655px;font-size:12px;line-height:12px;color:#e3e3e3;transform:scaleX(1.0196);">xhr</div>
<div style="position:absolute;left:1684px;top:655px;width:100px;height:16px;overflow:hidden"><div class="t" style="left:0.50px;top:0;font-size:12px;line-height:12px;color:#e3e3e3;transform:scaleX(0.9700);text-decoration:underline;">polyfills.145b4e8ba3c4d.js</div></div>
<div class="t" style="left:1811.20px;top:655px;font-size:12px;line-height:12px;color:#e3e3e3;transform:scaleX(0.9643);">0.7 kB</div>
<div style="position:absolute;left:1849px;top:655px;width:57px;height:16px;overflow:hidden"><div class="t" style="left:27.60px;top:0;font-size:12px;line-height:12px;color:#e3e3e3;transform:scaleX(0.9500);">77 ms</div></div>
<div class="t" style="left:1290.60px;top:981px;font-size:12.5px;line-height:12.5px;color:#c7c7c7;transform:scaleX(0.9591);">16 / 146 requests</div>
<div class="t" style="left:1402.60px;top:981px;font-size:12.5px;line-height:12.5px;color:#c7c7c7;transform:scaleX(0.9615);">75.7 kB / 205 kB transferred</div>
<div class="t" style="left:1571.80px;top:981px;font-size:12.5px;line-height:12.5px;color:#c7c7c7;transform:scaleX(0.9416);">74.5 kB / 1,928 kB resources</div>
</body></html>
